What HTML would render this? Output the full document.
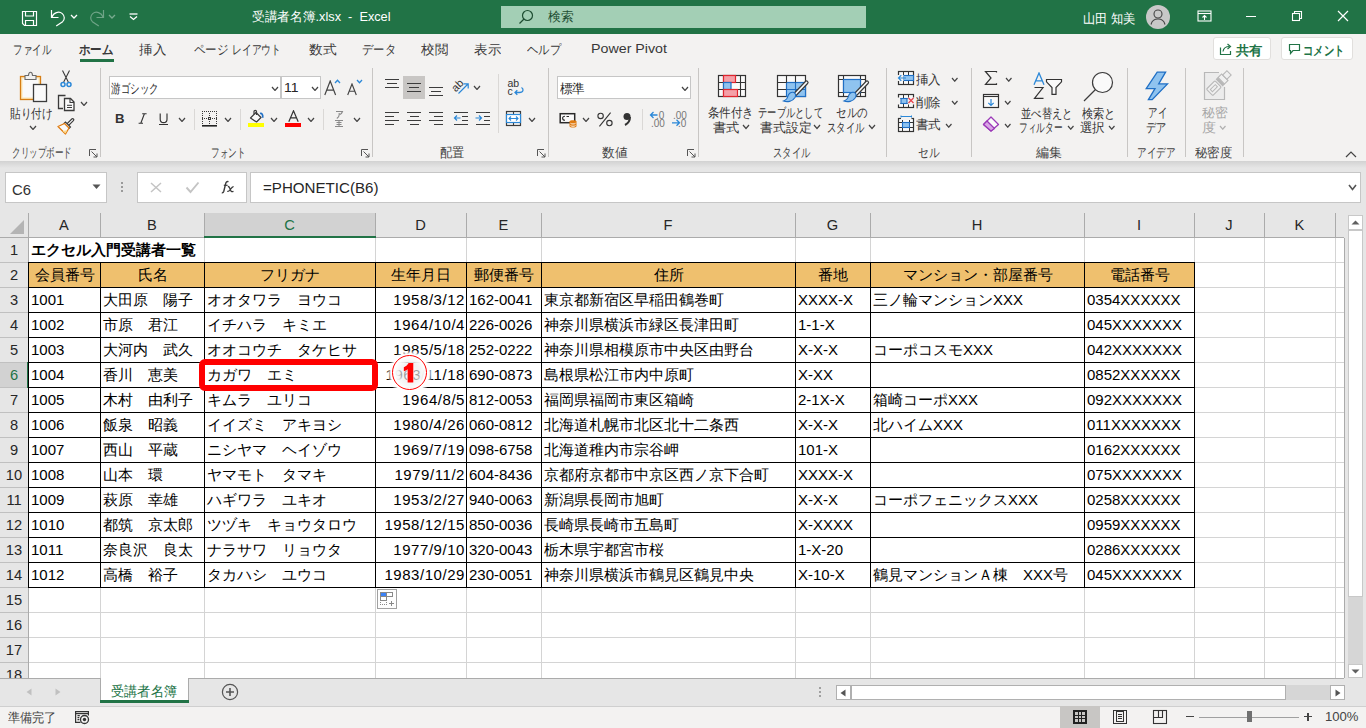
<!DOCTYPE html><html><head><meta charset='utf-8'><style>html,body{margin:0;padding:0;}body{width:1366px;height:728px;overflow:hidden;position:relative;background:#fff;font-family:"Liberation Sans", sans-serif;}</style></head><body><div style='position:absolute;left:0px;top:0px;width:1366px;height:34px;background:#217346;'></div>
<svg style='position:absolute;left:21px;top:10px;' width='17' height='17' viewBox='0 0 17 17' fill='none'><path d='M1.5 1.5H15.5V15.5H3.5L1.5 13.5Z' stroke='#fff' stroke-width='1.2'/><path d='M4.5 1.5V6H12.5V1.5' stroke='#fff' stroke-width='1.2'/><path d='M4.5 15.5V10.5H12.5V15.5' stroke='#fff' stroke-width='1.2'/></svg>
<svg style='position:absolute;left:50px;top:9px;' width='17' height='18' viewBox='0 0 17 18' fill='none'><path d='M1.5 1V8.5H8.5' stroke='#fff' stroke-width='1.2'/><path d='M1.9 8.2C3.5 3.5 9 1.8 12.3 4.6C15 7 14.8 10.5 12.6 12.7L6.2 17' stroke='#fff' stroke-width='1.2'/></svg>
<svg style='position:absolute;left:69.5px;top:13.8px;' width='8' height='5' viewBox='0 0 8 5' fill='none'><polyline points='1,1 4.0,4 7,1' stroke='#fff' stroke-width='1.3' fill='none'/></svg>
<svg style='position:absolute;left:88px;top:9px;opacity:.35' width='17' height='18' viewBox='0 0 17 18' fill='none'><path d='M15.5 1V8.5H8.5' stroke='#fff' stroke-width='1.2'/><path d='M15.1 8.2C13.5 3.5 8 1.8 4.7 4.6C2 7 2.2 10.5 4.4 12.7L10.8 17' stroke='#fff' stroke-width='1.2'/></svg>
<svg style='position:absolute;left:107.7px;top:13.8px;' width='8' height='5' viewBox='0 0 8 5' fill='none'><polyline points='1,1 4.0,4 7,1' stroke='#fff' stroke-width='1.3' fill='none'/></svg>
<div style='position:absolute;left:108px;top:13px;width:8px;height:6px;background:#217346;opacity:.6'></div>
<svg style='position:absolute;left:129px;top:13px;' width='9' height='8' viewBox='0 0 9 8' fill='none'><path d='M0.5 1H8.5' stroke='#fff' stroke-width='1.3'/><polyline points='1,3.5 4.5,6.5 8,3.5' stroke='#fff' stroke-width='1.3'/></svg>
<div style='position:absolute;left:252px;top:7.5px;line-height:17px;font-family:"Liberation Sans", sans-serif;font-size:13px;font-weight:normal;color:#ffffff;white-space:pre;transform:scaleX(0.9783);transform-origin:0 0;'>受講者名簿.xlsx  -  Excel</div>
<div style='position:absolute;left:501px;top:6px;width:365px;height:22px;background:#a3cfb5;'></div>
<svg style='position:absolute;left:518px;top:9px;' width='16' height='16' viewBox='0 0 16 16' fill='none'><circle cx='9.5' cy='6.5' r='5' stroke='#1d4d31' stroke-width='1.2'/><path d='M6 10L1.5 14.5' stroke='#1d4d31' stroke-width='1.3'/></svg>
<div style='position:absolute;left:548px;top:8.8px;line-height:16px;font-family:"Liberation Sans", sans-serif;font-size:12.5px;font-weight:normal;color:#1d4d31;white-space:pre;transform:scaleX(0.9808);transform-origin:0 0;'>検索</div>
<div style='position:absolute;left:1082.5px;top:9.5px;line-height:17px;font-family:"Liberation Sans", sans-serif;font-size:13px;font-weight:normal;color:#ffffff;white-space:pre;transform:scaleX(0.9438);transform-origin:0 0;'>山田 知美</div>
<svg style='position:absolute;left:1146px;top:5px;' width='24' height='24' viewBox='0 0 24 24' fill='none'><circle cx='12' cy='12' r='12' fill='#c8c8c8'/><circle cx='12' cy='9' r='4' stroke='#444' stroke-width='1.1'/><path d='M5 19.5C6 15.5 9 14 12 14C15 14 18 15.5 19 19.5' stroke='#444' stroke-width='1.1'/></svg>
<svg style='position:absolute;left:1197px;top:10px;' width='15' height='12' viewBox='0 0 15 12' fill='none'><rect x='1' y='1' width='13' height='10' stroke='#fff' stroke-width='1.1'/><path d='M1 3.5H14' stroke='#fff' stroke-width='1.1'/><path d='M7.5 10V5.5M5.5 7.5L7.5 5.5L9.5 7.5' stroke='#fff' stroke-width='1.1'/></svg>
<div style='position:absolute;left:1246px;top:16px;width:10px;height:1px;background:#ffffff;'></div>
<svg style='position:absolute;left:1291px;top:10px;' width='12' height='12' viewBox='0 0 12 12' fill='none'><path d='M3.5 3.5V1.5H10.5V8.5H8.5' stroke='#fff' stroke-width='1.1'/><rect x='1.5' y='3.5' width='7' height='7' stroke='#fff' stroke-width='1.1'/></svg>
<svg style='position:absolute;left:1337px;top:10px;' width='12' height='12' viewBox='0 0 12 12' fill='none'><path d='M1 1L11 11M11 1L1 11' stroke='#fff' stroke-width='1.2'/></svg>
<div style='position:absolute;left:0px;top:34px;width:1366px;height:127px;background:#f3f2f1;'></div>
<div style='position:absolute;left:13px;top:40.7px;line-height:17px;font-family:"Liberation Sans", sans-serif;font-size:13px;font-weight:normal;color:#383838;white-space:pre;transform:scaleX(0.7308);transform-origin:0 0;'>ファイル</div>
<div style='position:absolute;left:79px;top:40.7px;line-height:17px;font-family:"Liberation Sans", sans-serif;font-size:13px;font-weight:bold;color:#3a3a3a;white-space:pre;transform:scaleX(0.8846);transform-origin:0 0;'>ホーム</div>
<div style='position:absolute;left:80px;top:59px;width:34px;height:3px;background:#217346;'></div>
<div style='position:absolute;left:139px;top:40.7px;line-height:17px;font-family:"Liberation Sans", sans-serif;font-size:13px;font-weight:normal;color:#383838;white-space:pre;transform:scaleX(1.0385);transform-origin:0 0;'>挿入</div>
<div style='position:absolute;left:194px;top:40.7px;line-height:17px;font-family:"Liberation Sans", sans-serif;font-size:13px;font-weight:normal;color:#383838;white-space:pre;transform:scaleX(0.8846);transform-origin:0 0;'>ページ</div>
<div style='position:absolute;left:231.5px;top:40.7px;line-height:17px;font-family:"Liberation Sans", sans-serif;font-size:13px;font-weight:normal;color:#383838;white-space:pre;transform:scaleX(0.7538);transform-origin:0 0;'>レイアウト</div>
<div style='position:absolute;left:309px;top:40.7px;line-height:17px;font-family:"Liberation Sans", sans-serif;font-size:13px;font-weight:normal;color:#383838;white-space:pre;transform:scaleX(1.0577);transform-origin:0 0;'>数式</div>
<div style='position:absolute;left:361.5px;top:40.7px;line-height:17px;font-family:"Liberation Sans", sans-serif;font-size:13px;font-weight:normal;color:#383838;white-space:pre;transform:scaleX(0.8718);transform-origin:0 0;'>データ</div>
<div style='position:absolute;left:421px;top:40.7px;line-height:17px;font-family:"Liberation Sans", sans-serif;font-size:13px;font-weight:normal;color:#383838;white-space:pre;transform:scaleX(1.0385);transform-origin:0 0;'>校閲</div>
<div style='position:absolute;left:474px;top:40.7px;line-height:17px;font-family:"Liberation Sans", sans-serif;font-size:13px;font-weight:normal;color:#383838;white-space:pre;transform:scaleX(1.0385);transform-origin:0 0;'>表示</div>
<div style='position:absolute;left:527px;top:40.7px;line-height:17px;font-family:"Liberation Sans", sans-serif;font-size:13px;font-weight:normal;color:#383838;white-space:pre;transform:scaleX(0.8718);transform-origin:0 0;'>ヘルプ</div>
<div style='position:absolute;left:590.5px;top:40.2px;line-height:18px;font-family:"Liberation Sans", sans-serif;font-size:13.5px;font-weight:normal;color:#383838;white-space:pre;transform:scaleX(1.0551);transform-origin:0 0;'>Power Pivot</div>
<div style='position:absolute;left:1213px;top:37px;width:58px;height:23px;box-sizing:border-box;border:1px solid #e1dfdd;background:#ffffff;border-radius:3px'></div>
<svg style='position:absolute;left:1219px;top:42px;' width='14' height='14' viewBox='0 0 14 14' fill='none'><path d='M1.5 5.5V12.5H11.5V9' stroke='#217346' stroke-width='1.2'/><path d='M4 9.5C4.5 6 7 4.5 10.5 4.5' stroke='#217346' stroke-width='1.2'/><polyline points='8.5,2 11.5,4.5 8.5,7' stroke='#217346' stroke-width='1.2'/></svg>
<div style='position:absolute;left:1235.5px;top:42.0px;line-height:17px;font-family:"Liberation Sans", sans-serif;font-size:13px;font-weight:bold;color:#217346;white-space:pre;transform:scaleX(1.0192);transform-origin:0 0;'>共有</div>
<div style='position:absolute;left:1281px;top:37px;width:72px;height:23px;box-sizing:border-box;border:1px solid #e1dfdd;background:#ffffff;border-radius:3px'></div>
<svg style='position:absolute;left:1288px;top:43px;' width='13' height='12' viewBox='0 0 13 12' fill='none'><path d='M1.5 1.5H11.5V7.5H5L2.5 10.5V7.5H1.5Z' stroke='#217346' stroke-width='1.2'/></svg>
<div style='position:absolute;left:1303px;top:42.0px;line-height:17px;font-family:"Liberation Sans", sans-serif;font-size:13px;font-weight:bold;color:#217346;white-space:pre;transform:scaleX(0.7981);transform-origin:0 0;'>コメント</div>
<div style='position:absolute;left:100px;top:68px;width:1px;height:89px;background:#c8c6c4;'></div>
<div style='position:absolute;left:372px;top:68px;width:1px;height:89px;background:#c8c6c4;'></div>
<div style='position:absolute;left:548px;top:68px;width:1px;height:89px;background:#c8c6c4;'></div>
<div style='position:absolute;left:698px;top:68px;width:1px;height:89px;background:#c8c6c4;'></div>
<div style='position:absolute;left:886px;top:68px;width:1px;height:89px;background:#c8c6c4;'></div>
<div style='position:absolute;left:971px;top:68px;width:1px;height:89px;background:#c8c6c4;'></div>
<div style='position:absolute;left:1127px;top:68px;width:1px;height:89px;background:#c8c6c4;'></div>
<div style='position:absolute;left:1185px;top:68px;width:1px;height:89px;background:#c8c6c4;'></div>
<div style='position:absolute;left:1243px;top:68px;width:1px;height:89px;background:#c8c6c4;'></div>
<div style='position:absolute;left:498px;top:74px;width:1px;height:59px;background:#dad8d6;'></div>
<div style='position:absolute;left:194px;top:109px;width:1px;height:21px;background:#dad8d6;'></div>
<div style='position:absolute;left:240px;top:109px;width:1px;height:21px;background:#dad8d6;'></div>
<div style='position:absolute;left:323px;top:109px;width:1px;height:21px;background:#dad8d6;'></div>
<div style='position:absolute;left:642px;top:109px;width:1px;height:21px;background:#dad8d6;'></div>
<div style='position:absolute;left:11.5px;top:144.5px;line-height:16px;font-family:"Liberation Sans", sans-serif;font-size:12.5px;font-weight:normal;color:#444444;white-space:pre;transform:scaleX(0.6593);transform-origin:0 0;'>クリップボード</div>
<div style='position:absolute;left:211px;top:144.5px;line-height:16px;font-family:"Liberation Sans", sans-serif;font-size:12.5px;font-weight:normal;color:#444444;white-space:pre;transform:scaleX(0.6635);transform-origin:0 0;'>フォント</div>
<div style='position:absolute;left:439.5px;top:144.5px;line-height:16px;font-family:"Liberation Sans", sans-serif;font-size:12.5px;font-weight:normal;color:#444444;white-space:pre;transform:scaleX(0.9423);transform-origin:0 0;'>配置</div>
<div style='position:absolute;left:602px;top:144.5px;line-height:16px;font-family:"Liberation Sans", sans-serif;font-size:12.5px;font-weight:normal;color:#444444;white-space:pre;transform:scaleX(0.9808);transform-origin:0 0;'>数値</div>
<div style='position:absolute;left:773px;top:144.5px;line-height:16px;font-family:"Liberation Sans", sans-serif;font-size:12.5px;font-weight:normal;color:#444444;white-space:pre;transform:scaleX(0.7212);transform-origin:0 0;'>スタイル</div>
<div style='position:absolute;left:918px;top:144.5px;line-height:16px;font-family:"Liberation Sans", sans-serif;font-size:12.5px;font-weight:normal;color:#444444;white-space:pre;transform:scaleX(0.8269);transform-origin:0 0;'>セル</div>
<div style='position:absolute;left:1035.5px;top:144.5px;line-height:16px;font-family:"Liberation Sans", sans-serif;font-size:12.5px;font-weight:normal;color:#444444;white-space:pre;transform:scaleX(1.0000);transform-origin:0 0;'>編集</div>
<div style='position:absolute;left:1137px;top:144.5px;line-height:16px;font-family:"Liberation Sans", sans-serif;font-size:12.5px;font-weight:normal;color:#444444;white-space:pre;transform:scaleX(0.7404);transform-origin:0 0;'>アイデア</div>
<div style='position:absolute;left:1195px;top:144.5px;line-height:16px;font-family:"Liberation Sans", sans-serif;font-size:12.5px;font-weight:normal;color:#444444;white-space:pre;transform:scaleX(0.9487);transform-origin:0 0;'>秘密度</div>
<svg style='position:absolute;left:89px;top:149px;' width='9' height='9' viewBox='0 0 9 9' fill='none'><path d='M0.5 7V0.5H7' stroke='#555' stroke-width='1'/><path d='M2.5 2.5L8 8M4.5 8H8V4.5' stroke='#555' stroke-width='1'/></svg>
<svg style='position:absolute;left:361px;top:149px;' width='9' height='9' viewBox='0 0 9 9' fill='none'><path d='M0.5 7V0.5H7' stroke='#555' stroke-width='1'/><path d='M2.5 2.5L8 8M4.5 8H8V4.5' stroke='#555' stroke-width='1'/></svg>
<svg style='position:absolute;left:537px;top:149px;' width='9' height='9' viewBox='0 0 9 9' fill='none'><path d='M0.5 7V0.5H7' stroke='#555' stroke-width='1'/><path d='M2.5 2.5L8 8M4.5 8H8V4.5' stroke='#555' stroke-width='1'/></svg>
<svg style='position:absolute;left:687px;top:149px;' width='9' height='9' viewBox='0 0 9 9' fill='none'><path d='M0.5 7V0.5H7' stroke='#555' stroke-width='1'/><path d='M2.5 2.5L8 8M4.5 8H8V4.5' stroke='#555' stroke-width='1'/></svg>
<svg style='position:absolute;left:1345px;top:151px;' width='12' height='7' viewBox='0 0 12 7' fill='none'><polyline points='1,6 6,1 11,6' stroke='#444' stroke-width='1.2'/></svg>
<svg style='position:absolute;left:19px;top:71px;' width='29' height='32' viewBox='0 0 29 32' fill='none'><rect x='1.5' y='5.5' width='20' height='23' fill='#fde7b5' stroke='#d67d14' stroke-width='1.3'/><rect x='3.5' y='7.5' width='16' height='19' fill='#fafafa'/><path d='M6 8.5V4.5H9.5C9.5 2.5 10.5 1.2 11.5 1.2C12.5 1.2 13.5 2.5 13.5 4.5H17V8.5Z' fill='#f0f0f0' stroke='#6a6a6a' stroke-width='1.1'/><rect x='14.5' y='13.5' width='13' height='17' fill='#fafafa' stroke='#3c3c3c' stroke-width='1.3'/></svg>
<div style='position:absolute;left:9.5px;top:104.5px;line-height:17px;font-family:"Liberation Sans", sans-serif;font-size:13px;font-weight:normal;color:#333;white-space:pre;transform:scaleX(0.8173);transform-origin:0 0;'>貼り付け</div>
<svg style='position:absolute;left:28.5px;top:124.5px;' width='8' height='5.5' viewBox='0 0 8 5.5' fill='none'><polyline points='1,1 4.0,4.5 7,1' stroke='#444' stroke-width='1.2' fill='none'/></svg>
<svg style='position:absolute;left:60px;top:70px;' width='12' height='18' viewBox='0 0 12 18' fill='none'><path d='M2.5 0.5L8.3 12M9.5 0.5L3.7 12' stroke='#3a3a3a' stroke-width='1.1'/><circle cx='3' cy='14.5' r='2' stroke='#2b88d8' stroke-width='1.5'/><circle cx='9' cy='14.5' r='2' stroke='#2b88d8' stroke-width='1.5'/></svg>
<svg style='position:absolute;left:57px;top:94px;' width='18' height='18' viewBox='0 0 18 18' fill='none'><path d='M8.5 1.5H1.5V14.5H6' stroke='#3a3a3a' stroke-width='1.3'/><path d='M7.5 4.5H13.5L17 8V16.5H7.5Z' fill='#fafafa' stroke='#3a3a3a' stroke-width='1.3'/><path d='M13 4.5V8.5H17' stroke='#3a3a3a' stroke-width='1.1'/><path d='M10 11.3H15M10 13.5H15' stroke='#3a3a3a' stroke-width='1'/></svg>
<svg style='position:absolute;left:79.5px;top:100.5px;' width='8' height='5.5' viewBox='0 0 8 5.5' fill='none'><polyline points='1,1 4.0,4.5 7,1' stroke='#444' stroke-width='1.2' fill='none'/></svg>
<svg style='position:absolute;left:57px;top:118px;' width='18' height='17' viewBox='0 0 18 17' fill='none'><path d='M10.2 7.2L15.6 1.8' stroke='#3a3a3a' stroke-width='3.4' stroke-linecap='round'/><path d='M10.2 7.2L15.6 1.8' stroke='#fafafa' stroke-width='1.2' stroke-linecap='round'/><path d='M7 5.5L8.5 4L13.5 9L12 10.5Z' fill='#fafafa' stroke='#3a3a3a' stroke-width='1.1'/><path d='M1 8.5L7.5 5.5L12 10L8.5 16Z' fill='#fafafa' stroke='#e07b10' stroke-width='1.3' stroke-linejoin='round'/><path d='M5.5 13L10.2 12.2L8.5 15.5Z' fill='#fcd98a'/></svg>
<div style='position:absolute;left:109px;top:76px;width:172px;height:23px;box-sizing:border-box;border:1px solid #c6c6c6;background:#ffffff;'></div>
<div style='position:absolute;left:111px;top:79.5px;line-height:17px;font-family:"Liberation Sans", sans-serif;font-size:13px;font-weight:normal;color:#262626;white-space:pre;transform:scaleX(0.7308);transform-origin:0 0;'>游ゴシック</div>
<svg style='position:absolute;left:270.5px;top:85.5px;' width='8' height='5.5' viewBox='0 0 8 5.5' fill='none'><polyline points='1,1 4.0,4.5 7,1' stroke='#444' stroke-width='1.2' fill='none'/></svg>
<div style='position:absolute;left:281px;top:76px;width:40px;height:23px;box-sizing:border-box;border:1px solid #c6c6c6;background:#ffffff;'></div>
<div style='position:absolute;left:283.5px;top:79.0px;line-height:18px;font-family:"Liberation Sans", sans-serif;font-size:13.5px;font-weight:normal;color:#262626;white-space:pre;transform:scaleX(1.0346);transform-origin:0 0;'>11</div>
<svg style='position:absolute;left:310.5px;top:85.5px;' width='8' height='5.5' viewBox='0 0 8 5.5' fill='none'><polyline points='1,1 4.0,4.5 7,1' stroke='#444' stroke-width='1.2' fill='none'/></svg>
<svg style='position:absolute;left:324px;top:80px;' width='13' height='16' viewBox='0 0 13 16' fill='none'><path d='M0.8 15L6.2 1L11.6 15M2.7 10.2H9.7' stroke='#444' stroke-width='1.2'/></svg>
<svg style='position:absolute;left:334px;top:79px;' width='7' height='5' viewBox='0 0 7 5' fill='none'><polyline points='1,4 3.5,1.3 6,4' stroke='#2b88d8' stroke-width='1.3'/></svg>
<svg style='position:absolute;left:347px;top:83px;' width='11' height='13' viewBox='0 0 11 13' fill='none'><path d='M0.7 12L5 1L9.3 12M2.2 8.2H7.8' stroke='#444' stroke-width='1.15'/></svg>
<svg style='position:absolute;left:356px;top:79px;' width='7' height='5' viewBox='0 0 7 5' fill='none'><polyline points='1,1 3.5,3.7 6,1' stroke='#2b88d8' stroke-width='1.3'/></svg>
<div style='position:absolute;left:115px;top:109.7px;line-height:18px;font-family:"Liberation Sans", sans-serif;font-size:13.5px;font-weight:bold;color:#333;white-space:pre;transform:scaleX(0.9744);transform-origin:0 0;'>B</div>
<svg style='position:absolute;left:138px;top:113px;' width='9' height='11' viewBox='0 0 9 11' fill='none'><path d='M4.2 0.8H8.6M0.6 10.3H5M6.4 0.8L2.8 10.3' stroke='#333' stroke-width='1.1'/></svg>
<svg style='position:absolute;left:159px;top:113px;' width='10' height='13' viewBox='0 0 10 13' fill='none'><path d='M1.2 0.5V6.2C1.2 8.5 2.6 9.6 4.6 9.6C6.6 9.6 8 8.5 8 6.2V0.5' stroke='#333' stroke-width='1.15'/></svg>
<div style='position:absolute;left:159px;top:124px;width:9px;height:1px;background:#333;'></div>
<svg style='position:absolute;left:177.5px;top:116.5px;' width='8' height='5.5' viewBox='0 0 8 5.5' fill='none'><polyline points='1,1 4.0,4.5 7,1' stroke='#444' stroke-width='1.2' fill='none'/></svg>
<svg style='position:absolute;left:202px;top:111px;' width='15' height='16' viewBox='0 0 15 16' fill='none'><rect x='0' y='0' width='1' height='1' fill='#3a3a3a'/><rect x='0' y='7' width='1' height='1' fill='#3a3a3a'/><rect x='2' y='0' width='1' height='1' fill='#3a3a3a'/><rect x='2' y='7' width='1' height='1' fill='#3a3a3a'/><rect x='4' y='0' width='1' height='1' fill='#3a3a3a'/><rect x='4' y='7' width='1' height='1' fill='#3a3a3a'/><rect x='6' y='0' width='1' height='1' fill='#3a3a3a'/><rect x='6' y='7' width='1' height='1' fill='#3a3a3a'/><rect x='8' y='0' width='1' height='1' fill='#3a3a3a'/><rect x='8' y='7' width='1' height='1' fill='#3a3a3a'/><rect x='10' y='0' width='1' height='1' fill='#3a3a3a'/><rect x='10' y='7' width='1' height='1' fill='#3a3a3a'/><rect x='12' y='0' width='1' height='1' fill='#3a3a3a'/><rect x='12' y='7' width='1' height='1' fill='#3a3a3a'/><rect x='14' y='0' width='1' height='1' fill='#3a3a3a'/><rect x='14' y='7' width='1' height='1' fill='#3a3a3a'/><rect x='0' y='2' width='1' height='1' fill='#3a3a3a'/><rect x='7' y='2' width='1' height='1' fill='#3a3a3a'/><rect x='14' y='2' width='1' height='1' fill='#3a3a3a'/><rect x='0' y='4' width='1' height='1' fill='#3a3a3a'/><rect x='7' y='4' width='1' height='1' fill='#3a3a3a'/><rect x='14' y='4' width='1' height='1' fill='#3a3a3a'/><rect x='0' y='6' width='1' height='1' fill='#3a3a3a'/><rect x='7' y='6' width='1' height='1' fill='#3a3a3a'/><rect x='14' y='6' width='1' height='1' fill='#3a3a3a'/><rect x='0' y='8' width='1' height='1' fill='#3a3a3a'/><rect x='7' y='8' width='1' height='1' fill='#3a3a3a'/><rect x='14' y='8' width='1' height='1' fill='#3a3a3a'/><rect x='0' y='10' width='1' height='1' fill='#3a3a3a'/><rect x='7' y='10' width='1' height='1' fill='#3a3a3a'/><rect x='14' y='10' width='1' height='1' fill='#3a3a3a'/><rect x='0' y='12' width='1' height='1' fill='#3a3a3a'/><rect x='7' y='12' width='1' height='1' fill='#3a3a3a'/><rect x='14' y='12' width='1' height='1' fill='#3a3a3a'/><rect x='6' y='6' width='3' height='3' fill='#3a3a3a'/><rect x='7' y='7' width='1' height='1' fill='#f3f2f1'/><rect x='0' y='14' width='15' height='1.6' fill='#222'/></svg>
<svg style='position:absolute;left:223.5px;top:116.5px;' width='8' height='5.5' viewBox='0 0 8 5.5' fill='none'><polyline points='1,1 4.0,4.5 7,1' stroke='#444' stroke-width='1.2' fill='none'/></svg>
<svg style='position:absolute;left:248px;top:109px;' width='18' height='18' viewBox='0 0 18 18' fill='none'><path d='M2.5 9L8 3.5L13 8.5L8.5 13Z' stroke='#3a3a3a' stroke-width='1.2' fill='#fafafa' stroke-linejoin='round'/><path d='M6 5.5V2.5C6 1 8.5 1 8.5 2.5V6' stroke='#3a3a3a' stroke-width='1.2'/><path d='M12 4.5C14 4 15.2 6 14.6 8.8' stroke='#1f6fc5' stroke-width='1.7'/><rect x='0' y='14' width='16' height='4' fill='#ffff00'/></svg>
<svg style='position:absolute;left:269.5px;top:116.5px;' width='8' height='5.5' viewBox='0 0 8 5.5' fill='none'><polyline points='1,1 4.0,4.5 7,1' stroke='#444' stroke-width='1.2' fill='none'/></svg>
<svg style='position:absolute;left:288px;top:110px;' width='11' height='12' viewBox='0 0 11 12' fill='none'><path d='M0.8 11.8L5.5 0.8L10.2 11.8M2.6 7.8H8.4' stroke='#333' stroke-width='1.2'/></svg>
<div style='position:absolute;left:285px;top:123px;width:16px;height:4px;background:#ff0000;'></div>
<svg style='position:absolute;left:306.5px;top:116.5px;' width='8' height='5.5' viewBox='0 0 8 5.5' fill='none'><polyline points='1,1 4.0,4.5 7,1' stroke='#444' stroke-width='1.2' fill='none'/></svg>
<svg style='position:absolute;left:334px;top:110px;' width='10' height='18' viewBox='0 0 10 18' fill='none'><path d='M2 1.5H8.5C8 3 7 4 6 4.6M5.2 3V4.8C5.2 6.5 4.2 7.6 2.8 8.4' stroke='#8a8a8a' stroke-width='1.1'/><path d='M1 10.5H9M2.5 12.5H7.5M2.5 14.5H7.5M1 16.5H9' stroke='#8a8a8a' stroke-width='1.1'/><path d='M5 10.5V16.5' stroke='#8a8a8a' stroke-width='1'/></svg>
<svg style='position:absolute;left:352.5px;top:116.5px;' width='8' height='5.5' viewBox='0 0 8 5.5' fill='none'><polyline points='1,1 4.0,4.5 7,1' stroke='#444' stroke-width='1.2' fill='none'/></svg>
<div style='position:absolute;left:385px;top:79px;width:14px;height:1.3px;background:#3c3c3c;'></div>
<div style='position:absolute;left:387px;top:83px;width:10px;height:1.3px;background:#3c3c3c;'></div>
<div style='position:absolute;left:385px;top:87px;width:14px;height:1.3px;background:#3c3c3c;'></div>
<div style='position:absolute;left:403px;top:76px;width:22px;height:23px;background:#c8c6c4;'></div>
<div style='position:absolute;left:407px;top:82.5px;width:14px;height:1.3px;background:#3c3c3c;'></div>
<div style='position:absolute;left:409px;top:86.5px;width:10px;height:1.3px;background:#3c3c3c;'></div>
<div style='position:absolute;left:407px;top:90.5px;width:14px;height:1.3px;background:#3c3c3c;'></div>
<div style='position:absolute;left:429px;top:86.5px;width:14px;height:1.3px;background:#3c3c3c;'></div>
<div style='position:absolute;left:431px;top:90.5px;width:10px;height:1.3px;background:#3c3c3c;'></div>
<div style='position:absolute;left:429px;top:94.5px;width:14px;height:1.3px;background:#3c3c3c;'></div>
<svg style='position:absolute;left:451px;top:76px;' width='20' height='20' viewBox='0 0 20 20' fill='none'><text x='0' y='13' font-size='11' fill='#333' font-family='Liberation Sans' transform='rotate(-45 6.5 9)'>ab</text><path d='M7.5 17.5L17 8M12.5 7.8H17.2V12.5' stroke='#2b88d8' stroke-width='1.2'/></svg>
<svg style='position:absolute;left:473px;top:84.5px;' width='8' height='5.5' viewBox='0 0 8 5.5' fill='none'><polyline points='1,1 4.0,4.5 7,1' stroke='#444' stroke-width='1.2' fill='none'/></svg>
<div style='position:absolute;left:385px;top:112px;width:14px;height:1.3px;background:#3c3c3c;'></div>
<div style='position:absolute;left:385px;top:116px;width:9px;height:1.3px;background:#3c3c3c;'></div>
<div style='position:absolute;left:385px;top:120px;width:14px;height:1.3px;background:#3c3c3c;'></div>
<div style='position:absolute;left:385px;top:124px;width:9px;height:1.3px;background:#3c3c3c;'></div>
<div style='position:absolute;left:407px;top:112px;width:14px;height:1.3px;background:#3c3c3c;'></div>
<div style='position:absolute;left:409.5px;top:116px;width:9px;height:1.3px;background:#3c3c3c;'></div>
<div style='position:absolute;left:407px;top:120px;width:14px;height:1.3px;background:#3c3c3c;'></div>
<div style='position:absolute;left:409.5px;top:124px;width:9px;height:1.3px;background:#3c3c3c;'></div>
<div style='position:absolute;left:429px;top:112px;width:14px;height:1.3px;background:#3c3c3c;'></div>
<div style='position:absolute;left:434px;top:116px;width:9px;height:1.3px;background:#3c3c3c;'></div>
<div style='position:absolute;left:429px;top:120px;width:14px;height:1.3px;background:#3c3c3c;'></div>
<div style='position:absolute;left:434px;top:124px;width:9px;height:1.3px;background:#3c3c3c;'></div>
<div style='position:absolute;left:454px;top:112px;width:14px;height:1.3px;background:#3c3c3c;'></div>
<div style='position:absolute;left:454px;top:124px;width:14px;height:1.3px;background:#3c3c3c;'></div>
<div style='position:absolute;left:462px;top:116px;width:6px;height:1.3px;background:#3c3c3c;'></div>
<div style='position:absolute;left:462px;top:120px;width:6px;height:1.3px;background:#3c3c3c;'></div>
<svg style='position:absolute;left:453px;top:114px;' width='8' height='8' viewBox='0 0 8 8' fill='none'><path d='M7.5 4H1.5M4 1.5L1.5 4L4 6.5' stroke='#2b88d8' stroke-width='1.2'/></svg>
<div style='position:absolute;left:476px;top:112px;width:14px;height:1.3px;background:#3c3c3c;'></div>
<div style='position:absolute;left:476px;top:124px;width:14px;height:1.3px;background:#3c3c3c;'></div>
<div style='position:absolute;left:484px;top:116px;width:6px;height:1.3px;background:#3c3c3c;'></div>
<div style='position:absolute;left:484px;top:120px;width:6px;height:1.3px;background:#3c3c3c;'></div>
<svg style='position:absolute;left:475px;top:114px;' width='8' height='8' viewBox='0 0 8 8' fill='none'><path d='M0.5 4H6.5M4 1.5L6.5 4L4 6.5' stroke='#2b88d8' stroke-width='1.2'/></svg>
<svg style='position:absolute;left:507px;top:78px;' width='18' height='19' viewBox='0 0 18 19' fill='none'><text x='0.5' y='9' font-size='10.5' fill='#333' font-family='Liberation Sans'>ab</text><text x='0.5' y='16.5' font-size='10.5' fill='#333' font-family='Liberation Sans'>c</text><path d='M14.5 9.5C17 11 16.5 14.5 12.5 14.5H8M10.3 12.2L8 14.5L10.3 16.8' stroke='#2b88d8' stroke-width='1.3'/></svg>
<svg style='position:absolute;left:505px;top:110px;' width='17' height='17' viewBox='0 0 17 17' fill='none'><rect x='1.5' y='1.5' width='14' height='14' stroke='#3c3c3c' stroke-width='1.2'/><path d='M8.5 1.5V4.5M8.5 12.5V15.5M1.5 4.5H15.5M1.5 12.5H15.5' stroke='#3c3c3c' stroke-width='1.1'/><rect x='1.5' y='4.5' width='14' height='8' stroke='#2b88d8' stroke-width='1.2' fill='#fff'/><path d='M4 8.5H13M6 6.5L4 8.5L6 10.5M11 6.5L13 8.5L11 10.5' stroke='#2b88d8' stroke-width='1.1'/></svg>
<svg style='position:absolute;left:527.5px;top:116.5px;' width='8' height='5.5' viewBox='0 0 8 5.5' fill='none'><polyline points='1,1 4.0,4.5 7,1' stroke='#444' stroke-width='1.2' fill='none'/></svg>
<div style='position:absolute;left:557px;top:76px;width:134px;height:23px;box-sizing:border-box;border:1px solid #c6c6c6;background:#ffffff;'></div>
<div style='position:absolute;left:559.5px;top:79.5px;line-height:17px;font-family:"Liberation Sans", sans-serif;font-size:13px;font-weight:normal;color:#262626;white-space:pre;transform:scaleX(0.9615);transform-origin:0 0;'>標準</div>
<svg style='position:absolute;left:680.5px;top:85.5px;' width='8' height='5.5' viewBox='0 0 8 5.5' fill='none'><polyline points='1,1 4.0,4.5 7,1' stroke='#444' stroke-width='1.2' fill='none'/></svg>
<svg style='position:absolute;left:559px;top:112px;' width='19' height='18' viewBox='0 0 19 18' fill='none'><rect x='1.2' y='1.7' width='14.5' height='9' stroke='#2a2a2a' stroke-width='1.5' fill='#fafafa'/><path d='M6 4.3C4.2 4.3 3.6 5.2 3.6 6.3S4.2 8.3 6 8.3' stroke='#2a2a2a' stroke-width='1.1'/><path d='M7.5 4.5H10' stroke='#2a2a2a' stroke-width='1'/><path d='M10.5 9.5C10.5 7.8 17.5 7.8 17.5 9.5V14.3C17.5 16 10.5 16 10.5 14.3Z' fill='#e07b10'/><path d='M11.5 11.3C12.5 12.2 15.5 12.2 16.5 11.3M11.5 13.6C12.5 14.5 15.5 14.5 16.5 13.6' stroke='#fff' stroke-width='0.9'/></svg>
<svg style='position:absolute;left:581.5px;top:116.5px;' width='8' height='5.5' viewBox='0 0 8 5.5' fill='none'><polyline points='1,1 4.0,4.5 7,1' stroke='#444' stroke-width='1.2' fill='none'/></svg>
<svg style='position:absolute;left:597px;top:112px;' width='16' height='15' viewBox='0 0 16 15' fill='none'><circle cx='3.6' cy='3.9' r='2.7' stroke='#333' stroke-width='1.1'/><circle cx='12.4' cy='11.1' r='2.7' stroke='#333' stroke-width='1.1'/><path d='M13.6 0.6L2.4 14.4' stroke='#333' stroke-width='1.1'/></svg>
<svg style='position:absolute;left:622px;top:112px;' width='10' height='14' viewBox='0 0 10 14' fill='none'><circle cx='5' cy='4.5' r='3.5' fill='#333'/><path d='M8 5C8 9 6 11.5 3 13' stroke='#333' stroke-width='2'/></svg>
<svg style='position:absolute;left:649px;top:110px;' width='18' height='17' viewBox='0 0 18 17' fill='none'><path d='M8.5 5H1.5M4.5 2L1.5 5L4.5 8' stroke='#2b88d8' stroke-width='1.3'/><text x='7' y='9' font-size='10' fill='#777' font-family='Liberation Sans'>.0</text><text x='2' y='16.5' font-size='10' fill='#777' font-family='Liberation Sans'>.00</text></svg>
<svg style='position:absolute;left:671px;top:110px;' width='18' height='17' viewBox='0 0 18 17' fill='none'><text x='2' y='9' font-size='10' fill='#777' font-family='Liberation Sans'>.00</text><path d='M1 12.8H8.5M5.5 9.8L8.5 12.8L5.5 15.8' stroke='#2b88d8' stroke-width='1.3'/><text x='7' y='16.5' font-size='10' fill='#777' font-family='Liberation Sans'>.0</text></svg>
<svg style='position:absolute;left:717px;top:74px;' width='30' height='24' viewBox='0 0 30 24' fill='none'><rect x='1.5' y='1.5' width='27' height='21' fill='#fafafa' stroke='#333' stroke-width='1.2'/><path d='M1.5 8.5H28.5M1.5 15.5H28.5M6.5 1.5V22.5M23.5 1.5V22.5' stroke='#333' stroke-width='1.1'/><rect x='6.5' y='1.5' width='12' height='7' fill='#f4a0a8' stroke='#e0252e' stroke-width='1.2'/><rect x='6.5' y='8.5' width='7.5' height='7' fill='#8fc3ef' stroke='#1f6fc5' stroke-width='1.2'/><rect x='6.5' y='15.5' width='14' height='7' fill='#f4a0a8' stroke='#e0252e' stroke-width='1.2'/></svg>
<div style='position:absolute;left:708px;top:104.0px;line-height:17px;font-family:"Liberation Sans", sans-serif;font-size:13px;font-weight:normal;color:#333;white-space:pre;transform:scaleX(0.8846);transform-origin:0 0;'>条件付き</div>
<div style='position:absolute;left:713px;top:118.5px;line-height:17px;font-family:"Liberation Sans", sans-serif;font-size:13px;font-weight:normal;color:#333;white-space:pre;transform:scaleX(1.0192);transform-origin:0 0;'>書式</div>
<svg style='position:absolute;left:742px;top:124px;' width='8' height='5.5' viewBox='0 0 8 5.5' fill='none'><polyline points='1,1 4.0,4.5 7,1' stroke='#444' stroke-width='1.2' fill='none'/></svg>
<svg style='position:absolute;left:776px;top:74px;' width='34' height='30' viewBox='0 0 34 30' fill='none'><rect x='1.5' y='1.5' width='28' height='21' fill='#fafafa' stroke='#333' stroke-width='1.2'/><rect x='10.5' y='8.5' width='19' height='14' fill='#8fc3ef' stroke='#1f6fc5' stroke-width='1.2'/><path d='M1.5 8.5H10.5M1.5 15.5H10.5M10.5 1.5V8.5M19.5 1.5V8.5' stroke='#333' stroke-width='1.1'/><path d='M10.5 15.5H29.5M19.5 8.5V22.5' stroke='#1f6fc5' stroke-width='1.1'/><path d='M30.5 8.5L19.5 20' stroke='#3a3a3a' stroke-width='4.2' stroke-linecap='round'/><path d='M30.5 8.5L19.5 20' stroke='#fafafa' stroke-width='1.8' stroke-linecap='round'/><path d='M18 18.5C15 17.5 12.5 19.5 12 22C11.5 24.5 10 26 7.5 27C11 28.3 16.5 27.8 19 23.5C20 21.5 19.5 19.5 18 18.5Z' fill='#8fc3ef' stroke='#1f6fc5' stroke-width='1.1'/></svg>
<div style='position:absolute;left:758px;top:104.0px;line-height:17px;font-family:"Liberation Sans", sans-serif;font-size:13px;font-weight:normal;color:#333;white-space:pre;transform:scaleX(0.7143);transform-origin:0 0;'>テーブルとして</div>
<div style='position:absolute;left:760px;top:118.5px;line-height:17px;font-family:"Liberation Sans", sans-serif;font-size:13px;font-weight:normal;color:#333;white-space:pre;transform:scaleX(0.9904);transform-origin:0 0;'>書式設定</div>
<svg style='position:absolute;left:812.5px;top:124px;' width='8' height='5.5' viewBox='0 0 8 5.5' fill='none'><polyline points='1,1 4.0,4.5 7,1' stroke='#444' stroke-width='1.2' fill='none'/></svg>
<svg style='position:absolute;left:837px;top:74px;' width='34' height='30' viewBox='0 0 34 30' fill='none'><rect x='1.5' y='1.5' width='27' height='21' fill='#fafafa' stroke='#333' stroke-width='1.2'/><path d='M1.5 5.5H28.5M1.5 18.5H28.5M6.5 1.5V22.5M23.5 1.5V22.5' stroke='#333' stroke-width='1.1'/><rect x='6.5' y='5.5' width='17' height='13' fill='#8fc3ef' stroke='#1f6fc5' stroke-width='1.2'/><path d='M30.0 8.5L19.0 20' stroke='#3a3a3a' stroke-width='4.2' stroke-linecap='round'/><path d='M30.0 8.5L19.0 20' stroke='#fafafa' stroke-width='1.8' stroke-linecap='round'/><path d='M17.5 18.5C14.5 17.5 12.0 19.5 11.5 22C11.0 24.5 9.5 26 7.0 27C10.5 28.3 16.0 27.8 18.5 23.5C19.5 21.5 19.0 19.5 17.5 18.5Z' fill='#8fc3ef' stroke='#1f6fc5' stroke-width='1.1'/></svg>
<div style='position:absolute;left:836px;top:104.0px;line-height:17px;font-family:"Liberation Sans", sans-serif;font-size:13px;font-weight:normal;color:#333;white-space:pre;transform:scaleX(0.8077);transform-origin:0 0;'>セルの</div>
<div style='position:absolute;left:827px;top:118.5px;line-height:17px;font-family:"Liberation Sans", sans-serif;font-size:13px;font-weight:normal;color:#333;white-space:pre;transform:scaleX(0.7212);transform-origin:0 0;'>スタイル</div>
<svg style='position:absolute;left:867.5px;top:124px;' width='8' height='5.5' viewBox='0 0 8 5.5' fill='none'><polyline points='1,1 4.0,4.5 7,1' stroke='#444' stroke-width='1.2' fill='none'/></svg>
<svg style='position:absolute;left:897px;top:70px;' width='18' height='16' viewBox='0 0 18 16' fill='none'><rect x='1.5' y='1.5' width='15' height='13' fill='#fafafa' stroke='#333' stroke-width='1.2'/><path d='M1.5 5.5H16.5M1.5 10.5H16.5M6.5 1.5V14.5M11.5 1.5V14.5' stroke='#333' stroke-width='1'/><rect x='6.5' y='5.5' width='10' height='5' fill='#8fc3ef' stroke='#1f6fc5' stroke-width='1.1'/><rect x='0' y='5' width='6.5' height='6' fill='#f3f2f1'/><path d='M9 8H1.5M4.3 5.2L1.5 8L4.3 10.8' stroke='#2b88d8' stroke-width='1.2'/></svg>
<div style='position:absolute;left:916px;top:70.5px;line-height:17px;font-family:"Liberation Sans", sans-serif;font-size:13px;font-weight:normal;color:#333;white-space:pre;transform:scaleX(0.9615);transform-origin:0 0;'>挿入</div>
<svg style='position:absolute;left:951px;top:77px;' width='7.5' height='5.2' viewBox='0 0 7.5 5.2' fill='none'><polyline points='1,1 3.75,4.2 6.5,1' stroke='#444' stroke-width='1.2' fill='none'/></svg>
<svg style='position:absolute;left:897px;top:93px;' width='18' height='16' viewBox='0 0 18 16' fill='none'><rect x='1.5' y='1.5' width='15' height='13' fill='#fafafa' stroke='#333' stroke-width='1.2'/><path d='M1.5 5.5H16.5M1.5 10.5H16.5M6.5 1.5V14.5M11.5 1.5V14.5' stroke='#333' stroke-width='1'/><rect x='0' y='4.5' width='3.5' height='7' fill='#f3f2f1'/><rect x='10.5' y='4.5' width='8' height='7' fill='#f3f2f1'/><rect x='4' y='5.5' width='6' height='5' fill='#8fc3ef' stroke='#1f6fc5' stroke-width='1.1'/><path d='M11.5 5L16.5 10M16.5 5L11.5 10' stroke='#e8404a' stroke-width='1.2'/></svg>
<div style='position:absolute;left:916px;top:93.5px;line-height:17px;font-family:"Liberation Sans", sans-serif;font-size:13px;font-weight:normal;color:#333;white-space:pre;transform:scaleX(0.9615);transform-origin:0 0;'>削除</div>
<svg style='position:absolute;left:951px;top:100px;' width='7.5' height='5.2' viewBox='0 0 7.5 5.2' fill='none'><polyline points='1,1 3.75,4.2 6.5,1' stroke='#444' stroke-width='1.2' fill='none'/></svg>
<svg style='position:absolute;left:897px;top:115px;' width='18' height='18' viewBox='0 0 18 18' fill='none'><rect x='1.5' y='3.5' width='15' height='13' fill='#fafafa' stroke='#333' stroke-width='1.2'/><path d='M1.5 7.5H16.5M1.5 12.5H16.5M5.5 3.5V16.5M12.5 3.5V16.5' stroke='#333' stroke-width='1'/><rect x='5.5' y='7.5' width='7' height='5' fill='#8fc3ef' stroke='#1f6fc5' stroke-width='1.1'/><rect x='4' y='2' width='10.5' height='3' fill='#f3f2f1'/><path d='M4 1.5H14.5M4 0.5V2.5M14.5 0.5V2.5' stroke='#2b88d8' stroke-width='1'/></svg>
<div style='position:absolute;left:916px;top:116.0px;line-height:17px;font-family:"Liberation Sans", sans-serif;font-size:13px;font-weight:normal;color:#333;white-space:pre;transform:scaleX(0.9615);transform-origin:0 0;'>書式</div>
<svg style='position:absolute;left:945px;top:123px;' width='7.5' height='5.2' viewBox='0 0 7.5 5.2' fill='none'><polyline points='1,1 3.75,4.2 6.5,1' stroke='#444' stroke-width='1.2' fill='none'/></svg>
<svg style='position:absolute;left:984px;top:70px;' width='14' height='16' viewBox='0 0 14 16' fill='none'><path d='M12.5 2.5V1.5H1.5L7 8L1.5 14.3H12.5V13.3' stroke='#333' stroke-width='1.2'/></svg>
<svg style='position:absolute;left:1004.5px;top:77px;' width='7.5' height='5.2' viewBox='0 0 7.5 5.2' fill='none'><polyline points='1,1 3.75,4.2 6.5,1' stroke='#444' stroke-width='1.2' fill='none'/></svg>
<svg style='position:absolute;left:982px;top:93px;' width='18' height='16' viewBox='0 0 18 16' fill='none'><rect x='1.5' y='1.5' width='15' height='13' fill='#fafafa' stroke='#333' stroke-width='1.2'/><path d='M1.5 3.5H16.5' stroke='#333' stroke-width='1.1'/><path d='M9 6V12.5M6.3 9.8L9 12.5L11.7 9.8' stroke='#2b88d8' stroke-width='1.2'/></svg>
<svg style='position:absolute;left:1003.5px;top:100px;' width='7.5' height='5.2' viewBox='0 0 7.5 5.2' fill='none'><polyline points='1,1 3.75,4.2 6.5,1' stroke='#444' stroke-width='1.2' fill='none'/></svg>
<svg style='position:absolute;left:982px;top:115px;' width='18' height='17' viewBox='0 0 18 17' fill='none'><path d='M1.5 9.5L9 2L16.5 9.5L9 16Z' fill='#fafafa' stroke='#9b39b8' stroke-width='1.3' stroke-linejoin='round'/><path d='M1.5 9.5L5 6L12.5 13.5L9 16Z' fill='#d9a6e6' stroke='#9b39b8' stroke-width='1.3' stroke-linejoin='round'/></svg>
<svg style='position:absolute;left:1003.5px;top:123px;' width='7.5' height='5.2' viewBox='0 0 7.5 5.2' fill='none'><polyline points='1,1 3.75,4.2 6.5,1' stroke='#444' stroke-width='1.2' fill='none'/></svg>
<svg style='position:absolute;left:1033px;top:72px;' width='12' height='14' viewBox='0 0 12 14' fill='none'><path d='M1 12.8L6 1L11 12.8M2.8 8.8H9.2' stroke='#2b88d8' stroke-width='1.3'/></svg>
<svg style='position:absolute;left:1033px;top:86px;' width='12' height='14' viewBox='0 0 12 14' fill='none'><path d='M1.5 1.5H10L1.5 12.3H10.5' stroke='#333' stroke-width='1.2'/></svg>
<svg style='position:absolute;left:1045px;top:78px;' width='19' height='18' viewBox='0 0 19 18' fill='none'><path d='M1.5 1.5H16.5V3.8L11 9.5V16.3H7V9.5L1.5 3.8Z' stroke='#333' stroke-width='1.2' fill='#fafafa'/></svg>
<div style='position:absolute;left:1021px;top:105.0px;line-height:17px;font-family:"Liberation Sans", sans-serif;font-size:13px;font-weight:normal;color:#333;white-space:pre;transform:scaleX(0.7923);transform-origin:0 0;'>並べ替えと</div>
<div style='position:absolute;left:1019px;top:118.8px;line-height:17px;font-family:"Liberation Sans", sans-serif;font-size:13px;font-weight:normal;color:#333;white-space:pre;transform:scaleX(0.6692);transform-origin:0 0;'>フィルター</div>
<svg style='position:absolute;left:1066.5px;top:125px;' width='7.5' height='5.2' viewBox='0 0 7.5 5.2' fill='none'><polyline points='1,1 3.75,4.2 6.5,1' stroke='#444' stroke-width='1.2' fill='none'/></svg>
<svg style='position:absolute;left:1083px;top:71px;' width='31' height='31' viewBox='0 0 31 31' fill='none'><circle cx='19.5' cy='11.5' r='10' fill='#fafafa' stroke='#3c3c3c' stroke-width='1.2'/><path d='M12.5 18.5L1 30' stroke='#3c3c3c' stroke-width='1.3'/></svg>
<div style='position:absolute;left:1082px;top:105.0px;line-height:17px;font-family:"Liberation Sans", sans-serif;font-size:13px;font-weight:normal;color:#333;white-space:pre;transform:scaleX(0.8590);transform-origin:0 0;'>検索と</div>
<div style='position:absolute;left:1080px;top:118.8px;line-height:17px;font-family:"Liberation Sans", sans-serif;font-size:13px;font-weight:normal;color:#333;white-space:pre;transform:scaleX(0.9615);transform-origin:0 0;'>選択</div>
<svg style='position:absolute;left:1108px;top:125px;' width='7.5' height='5.2' viewBox='0 0 7.5 5.2' fill='none'><polyline points='1,1 3.75,4.2 6.5,1' stroke='#444' stroke-width='1.2' fill='none'/></svg>
<svg style='position:absolute;left:1145px;top:71px;' width='24' height='30' viewBox='0 0 24 30' fill='none'><path d='M12.2 1.2H20.6L13.7 12.9H22.5L7.2 28.7H3.4L10 17.7H1.2Z' fill='#8fc3ef' stroke='#1f6fc5' stroke-width='1.3' stroke-linejoin='miter'/></svg>
<div style='position:absolute;left:1147.5px;top:104.0px;line-height:17px;font-family:"Liberation Sans", sans-serif;font-size:13px;font-weight:normal;color:#333;white-space:pre;transform:scaleX(0.7308);transform-origin:0 0;'>アイ</div>
<div style='position:absolute;left:1146px;top:118.8px;line-height:17px;font-family:"Liberation Sans", sans-serif;font-size:13px;font-weight:normal;color:#333;white-space:pre;transform:scaleX(0.7885);transform-origin:0 0;'>デア</div>
<svg style='position:absolute;left:1202px;top:68px;' width='32' height='33' viewBox='0 0 32 33' fill='none'><path d='M22.5 19V31.5H2.5V4.5H17' stroke='#b8b8b8' stroke-width='1.2' fill='#ececec'/><g transform='rotate(-45 17.5 14.5)'><rect x='3.5' y='10' width='12' height='9' rx='1' fill='#f0f0f0' stroke='#b8b8b8' stroke-width='1.1'/><rect x='6' y='13' width='7' height='3' stroke='#b8b8b8' stroke-width='1'/><rect x='17' y='9.5' width='3' height='10' fill='#b8b8b8'/><rect x='20' y='10' width='5' height='9' fill='#f0f0f0' stroke='#b8b8b8' stroke-width='1.1'/><rect x='25' y='11.5' width='6' height='6' fill='#f0f0f0' stroke='#b8b8b8' stroke-width='1.1'/></g></svg>
<div style='position:absolute;left:1202px;top:104.0px;line-height:17px;font-family:"Liberation Sans", sans-serif;font-size:13px;font-weight:normal;color:#a6a6a6;white-space:pre;transform:scaleX(0.9808);transform-origin:0 0;'>秘密</div>
<div style='position:absolute;left:1202px;top:118.8px;line-height:17px;font-family:"Liberation Sans", sans-serif;font-size:13px;font-weight:normal;color:#a6a6a6;white-space:pre;transform:scaleX(1.0769);transform-origin:0 0;'>度</div>
<svg style='position:absolute;left:1218.5px;top:125px;' width='7.5' height='5.2' viewBox='0 0 7.5 5.2' fill='none'><polyline points='1,1 3.75,4.2 6.5,1' stroke='#b0b0b0' stroke-width='1.2' fill='none'/></svg>
<div style='position:absolute;left:0px;top:161px;width:1366px;height:52px;background:#e6e6e6;'></div>
<div style='position:absolute;left:0;top:161px;width:1366px;height:7px;background:linear-gradient(#d2d2d2,#e6e6e6)'></div>
<div style='position:absolute;left:5px;top:172px;width:102px;height:31px;box-sizing:border-box;border:1px solid #c6c6c6;background:#ffffff;'></div>
<div style='position:absolute;left:11.5px;top:179.5px;line-height:20px;font-family:"Liberation Sans", sans-serif;font-size:15.5px;font-weight:normal;color:#333333;white-space:pre;transform:scaleX(0.9582);transform-origin:0 0;'>C6</div>
<svg style='position:absolute;left:92px;top:184px;' width='9' height='6' viewBox='0 0 9 6' fill='none'><path d='M0.5 0.5H8.5L4.5 5Z' fill='#555'/></svg>
<div style='position:absolute;left:121px;top:182px;width:1.5px;height:1.5px;background:#9a9a9a;'></div>
<div style='position:absolute;left:121px;top:186px;width:1.5px;height:1.5px;background:#9a9a9a;'></div>
<div style='position:absolute;left:121px;top:190px;width:1.5px;height:1.5px;background:#9a9a9a;'></div>
<div style='position:absolute;left:137px;top:172px;width:110px;height:31px;box-sizing:border-box;border:1px solid #c6c6c6;background:#ffffff;'></div>
<svg style='position:absolute;left:150px;top:182px;' width='12' height='11' viewBox='0 0 12 11' fill='none'><path d='M1 1L11 10M11 1L1 10' stroke='#c4c4c4' stroke-width='1.5'/></svg>
<svg style='position:absolute;left:185px;top:181px;' width='15' height='13' viewBox='0 0 15 13' fill='none'><path d='M1.5 6.5L5.5 11L13.5 1.5' stroke='#c4c4c4' stroke-width='1.9'/></svg>
<svg style='position:absolute;left:221px;top:180px;' width='14' height='14' viewBox='0 0 14 14' fill='none'><path d='M7.5 1.6C6 1.2 5 2 4.6 3.8L2.8 11.2C2.4 12.6 1.7 13 0.8 12.8' stroke='#3a3a3a' stroke-width='1.4'/><path d='M2.8 5.3H6.6' stroke='#3a3a3a' stroke-width='1.2'/><path d='M6.8 6.5C7.8 6.3 8.3 7 8.8 8.3L9.8 10.8C10.2 11.8 10.8 12 12.5 11.3M12.6 6.6C11.6 6.4 10.5 7.8 9.3 9.5C8 11.3 7.3 11.7 6.3 11.3' stroke='#3a3a3a' stroke-width='1.3'/></svg>
<div style='position:absolute;left:250px;top:172px;width:1111px;height:31px;box-sizing:border-box;border:1px solid #c6c6c6;background:#ffffff;'></div>
<div style='position:absolute;left:262.5px;top:178.5px;line-height:19px;font-family:"Liberation Sans", sans-serif;font-size:14.67px;font-weight:normal;color:#262626;white-space:pre;transform:scaleX(1.0314);transform-origin:0 0;'>=PHONETIC(B6)</div>
<svg style='position:absolute;left:1348px;top:184px;' width='9' height='6.5' viewBox='0 0 9 6.5' fill='none'><polyline points='1,1 4.5,5.5 8,1' stroke='#555' stroke-width='1.6' fill='none'/></svg>
<div style='position:absolute;left:0px;top:213px;width:1344px;height:25px;background:#e6e6e6;'></div>
<div style='position:absolute;left:0px;top:238px;width:29px;height:440px;background:#e6e6e6;'></div>
<svg style='position:absolute;left:9px;top:219px;' width='16' height='16' viewBox='0 0 16 16' fill='none'><path d='M15 1V15H1Z' fill='#b4b4b4'/></svg>
<div style='position:absolute;left:29px;top:238px;width:1315px;height:440px;background:#ffffff;'></div>
<div style='position:absolute;left:205px;top:213px;width:170px;height:24px;background:#d2d2d2;'></div>
<div style='position:absolute;left:204px;top:236px;width:172px;height:2px;background:#217346;'></div>
<div style='position:absolute;left:0px;top:363px;width:28px;height:24px;background:#d2d2d2;'></div>
<div style='position:absolute;left:27px;top:362px;width:2px;height:26px;background:#217346;'></div>
<div style='position:absolute;left:100px;top:213px;width:1px;height:24px;background:#ababab;'></div>
<div style='position:absolute;left:204px;top:213px;width:1px;height:24px;background:#ababab;'></div>
<div style='position:absolute;left:375px;top:213px;width:1px;height:24px;background:#ababab;'></div>
<div style='position:absolute;left:466px;top:213px;width:1px;height:24px;background:#ababab;'></div>
<div style='position:absolute;left:541px;top:213px;width:1px;height:24px;background:#ababab;'></div>
<div style='position:absolute;left:795px;top:213px;width:1px;height:24px;background:#ababab;'></div>
<div style='position:absolute;left:870px;top:213px;width:1px;height:24px;background:#ababab;'></div>
<div style='position:absolute;left:1084px;top:213px;width:1px;height:24px;background:#ababab;'></div>
<div style='position:absolute;left:1194px;top:213px;width:1px;height:24px;background:#ababab;'></div>
<div style='position:absolute;left:1264px;top:213px;width:1px;height:24px;background:#ababab;'></div>
<div style='position:absolute;left:1335px;top:213px;width:1px;height:24px;background:#ababab;'></div>
<div style='position:absolute;left:0px;top:237px;width:1344px;height:1px;background:#ababab;'></div>
<div style='position:absolute;left:204px;top:236px;width:172px;height:2px;background:#217346;'></div>
<div style='position:absolute;left:28px;top:213px;width:1px;height:465px;background:#ababab;'></div>
<div style='position:absolute;left:0px;top:262px;width:28px;height:1px;background:#c0c0c0;'></div>
<div style='position:absolute;left:0px;top:287px;width:28px;height:1px;background:#c0c0c0;'></div>
<div style='position:absolute;left:0px;top:312px;width:28px;height:1px;background:#c0c0c0;'></div>
<div style='position:absolute;left:0px;top:337px;width:28px;height:1px;background:#c0c0c0;'></div>
<div style='position:absolute;left:0px;top:362px;width:28px;height:1px;background:#c0c0c0;'></div>
<div style='position:absolute;left:0px;top:387px;width:28px;height:1px;background:#c0c0c0;'></div>
<div style='position:absolute;left:0px;top:412px;width:28px;height:1px;background:#c0c0c0;'></div>
<div style='position:absolute;left:0px;top:437px;width:28px;height:1px;background:#c0c0c0;'></div>
<div style='position:absolute;left:0px;top:462px;width:28px;height:1px;background:#c0c0c0;'></div>
<div style='position:absolute;left:0px;top:487px;width:28px;height:1px;background:#c0c0c0;'></div>
<div style='position:absolute;left:0px;top:512px;width:28px;height:1px;background:#c0c0c0;'></div>
<div style='position:absolute;left:0px;top:537px;width:28px;height:1px;background:#c0c0c0;'></div>
<div style='position:absolute;left:0px;top:562px;width:28px;height:1px;background:#c0c0c0;'></div>
<div style='position:absolute;left:0px;top:587px;width:28px;height:1px;background:#c0c0c0;'></div>
<div style='position:absolute;left:0px;top:612px;width:28px;height:1px;background:#c0c0c0;'></div>
<div style='position:absolute;left:0px;top:637px;width:28px;height:1px;background:#c0c0c0;'></div>
<div style='position:absolute;left:0px;top:662px;width:28px;height:1px;background:#c0c0c0;'></div>
<div style='position:absolute;left:27px;top:362px;width:2px;height:26px;background:#217346;'></div>
<div style='position:absolute;left:100px;top:238px;width:1px;height:440px;background:#d4d4d4;'></div>
<div style='position:absolute;left:204px;top:238px;width:1px;height:440px;background:#d4d4d4;'></div>
<div style='position:absolute;left:375px;top:238px;width:1px;height:440px;background:#d4d4d4;'></div>
<div style='position:absolute;left:466px;top:238px;width:1px;height:440px;background:#d4d4d4;'></div>
<div style='position:absolute;left:541px;top:238px;width:1px;height:440px;background:#d4d4d4;'></div>
<div style='position:absolute;left:795px;top:238px;width:1px;height:440px;background:#d4d4d4;'></div>
<div style='position:absolute;left:870px;top:238px;width:1px;height:440px;background:#d4d4d4;'></div>
<div style='position:absolute;left:1084px;top:238px;width:1px;height:440px;background:#d4d4d4;'></div>
<div style='position:absolute;left:1194px;top:238px;width:1px;height:440px;background:#d4d4d4;'></div>
<div style='position:absolute;left:1264px;top:238px;width:1px;height:440px;background:#d4d4d4;'></div>
<div style='position:absolute;left:1335px;top:238px;width:1px;height:440px;background:#d4d4d4;'></div>
<div style='position:absolute;left:29px;top:262px;width:1315px;height:1px;background:#d4d4d4;'></div>
<div style='position:absolute;left:29px;top:287px;width:1315px;height:1px;background:#d4d4d4;'></div>
<div style='position:absolute;left:29px;top:312px;width:1315px;height:1px;background:#d4d4d4;'></div>
<div style='position:absolute;left:29px;top:337px;width:1315px;height:1px;background:#d4d4d4;'></div>
<div style='position:absolute;left:29px;top:362px;width:1315px;height:1px;background:#d4d4d4;'></div>
<div style='position:absolute;left:29px;top:387px;width:1315px;height:1px;background:#d4d4d4;'></div>
<div style='position:absolute;left:29px;top:412px;width:1315px;height:1px;background:#d4d4d4;'></div>
<div style='position:absolute;left:29px;top:437px;width:1315px;height:1px;background:#d4d4d4;'></div>
<div style='position:absolute;left:29px;top:462px;width:1315px;height:1px;background:#d4d4d4;'></div>
<div style='position:absolute;left:29px;top:487px;width:1315px;height:1px;background:#d4d4d4;'></div>
<div style='position:absolute;left:29px;top:512px;width:1315px;height:1px;background:#d4d4d4;'></div>
<div style='position:absolute;left:29px;top:537px;width:1315px;height:1px;background:#d4d4d4;'></div>
<div style='position:absolute;left:29px;top:562px;width:1315px;height:1px;background:#d4d4d4;'></div>
<div style='position:absolute;left:29px;top:587px;width:1315px;height:1px;background:#d4d4d4;'></div>
<div style='position:absolute;left:29px;top:612px;width:1315px;height:1px;background:#d4d4d4;'></div>
<div style='position:absolute;left:29px;top:637px;width:1315px;height:1px;background:#d4d4d4;'></div>
<div style='position:absolute;left:29px;top:662px;width:1315px;height:1px;background:#d4d4d4;'></div>
<div style='position:absolute;left:28px;top:213px;width:72px;height:24px;line-height:24px;text-align:center;font-family:"Liberation Sans", sans-serif;font-size:14.67px;color:#262626'>A</div>
<div style='position:absolute;left:100px;top:213px;width:104px;height:24px;line-height:24px;text-align:center;font-family:"Liberation Sans", sans-serif;font-size:14.67px;color:#262626'>B</div>
<div style='position:absolute;left:204px;top:213px;width:171px;height:24px;line-height:24px;text-align:center;font-family:"Liberation Sans", sans-serif;font-size:14.67px;color:#217346'>C</div>
<div style='position:absolute;left:375px;top:213px;width:91px;height:24px;line-height:24px;text-align:center;font-family:"Liberation Sans", sans-serif;font-size:14.67px;color:#262626'>D</div>
<div style='position:absolute;left:466px;top:213px;width:75px;height:24px;line-height:24px;text-align:center;font-family:"Liberation Sans", sans-serif;font-size:14.67px;color:#262626'>E</div>
<div style='position:absolute;left:541px;top:213px;width:254px;height:24px;line-height:24px;text-align:center;font-family:"Liberation Sans", sans-serif;font-size:14.67px;color:#262626'>F</div>
<div style='position:absolute;left:795px;top:213px;width:75px;height:24px;line-height:24px;text-align:center;font-family:"Liberation Sans", sans-serif;font-size:14.67px;color:#262626'>G</div>
<div style='position:absolute;left:870px;top:213px;width:214px;height:24px;line-height:24px;text-align:center;font-family:"Liberation Sans", sans-serif;font-size:14.67px;color:#262626'>H</div>
<div style='position:absolute;left:1084px;top:213px;width:110px;height:24px;line-height:24px;text-align:center;font-family:"Liberation Sans", sans-serif;font-size:14.67px;color:#262626'>I</div>
<div style='position:absolute;left:1194px;top:213px;width:70px;height:24px;line-height:24px;text-align:center;font-family:"Liberation Sans", sans-serif;font-size:14.67px;color:#262626'>J</div>
<div style='position:absolute;left:1264px;top:213px;width:71px;height:24px;line-height:24px;text-align:center;font-family:"Liberation Sans", sans-serif;font-size:14.67px;color:#262626'>K</div>
<div style='position:absolute;left:0;top:238px;width:28px;height:24px;line-height:24px;text-align:center;font-family:"Liberation Sans", sans-serif;font-size:14.67px;color:#262626'>1</div>
<div style='position:absolute;left:0;top:263px;width:28px;height:24px;line-height:24px;text-align:center;font-family:"Liberation Sans", sans-serif;font-size:14.67px;color:#262626'>2</div>
<div style='position:absolute;left:0;top:288px;width:28px;height:24px;line-height:24px;text-align:center;font-family:"Liberation Sans", sans-serif;font-size:14.67px;color:#262626'>3</div>
<div style='position:absolute;left:0;top:313px;width:28px;height:24px;line-height:24px;text-align:center;font-family:"Liberation Sans", sans-serif;font-size:14.67px;color:#262626'>4</div>
<div style='position:absolute;left:0;top:338px;width:28px;height:24px;line-height:24px;text-align:center;font-family:"Liberation Sans", sans-serif;font-size:14.67px;color:#262626'>5</div>
<div style='position:absolute;left:0;top:363px;width:28px;height:24px;line-height:24px;text-align:center;font-family:"Liberation Sans", sans-serif;font-size:14.67px;color:#217346'>6</div>
<div style='position:absolute;left:0;top:388px;width:28px;height:24px;line-height:24px;text-align:center;font-family:"Liberation Sans", sans-serif;font-size:14.67px;color:#262626'>7</div>
<div style='position:absolute;left:0;top:413px;width:28px;height:24px;line-height:24px;text-align:center;font-family:"Liberation Sans", sans-serif;font-size:14.67px;color:#262626'>8</div>
<div style='position:absolute;left:0;top:438px;width:28px;height:24px;line-height:24px;text-align:center;font-family:"Liberation Sans", sans-serif;font-size:14.67px;color:#262626'>9</div>
<div style='position:absolute;left:0;top:463px;width:28px;height:24px;line-height:24px;text-align:center;font-family:"Liberation Sans", sans-serif;font-size:14.67px;color:#262626'>10</div>
<div style='position:absolute;left:0;top:488px;width:28px;height:24px;line-height:24px;text-align:center;font-family:"Liberation Sans", sans-serif;font-size:14.67px;color:#262626'>11</div>
<div style='position:absolute;left:0;top:513px;width:28px;height:24px;line-height:24px;text-align:center;font-family:"Liberation Sans", sans-serif;font-size:14.67px;color:#262626'>12</div>
<div style='position:absolute;left:0;top:538px;width:28px;height:24px;line-height:24px;text-align:center;font-family:"Liberation Sans", sans-serif;font-size:14.67px;color:#262626'>13</div>
<div style='position:absolute;left:0;top:563px;width:28px;height:24px;line-height:24px;text-align:center;font-family:"Liberation Sans", sans-serif;font-size:14.67px;color:#262626'>14</div>
<div style='position:absolute;left:0;top:588px;width:28px;height:24px;line-height:24px;text-align:center;font-family:"Liberation Sans", sans-serif;font-size:14.67px;color:#262626'>15</div>
<div style='position:absolute;left:0;top:613px;width:28px;height:24px;line-height:24px;text-align:center;font-family:"Liberation Sans", sans-serif;font-size:14.67px;color:#262626'>16</div>
<div style='position:absolute;left:0;top:638px;width:28px;height:24px;line-height:24px;text-align:center;font-family:"Liberation Sans", sans-serif;font-size:14.67px;color:#262626'>17</div>
<div style='position:absolute;left:0;top:663px;width:28px;height:24px;line-height:24px;text-align:center;font-family:"Liberation Sans", sans-serif;font-size:14.67px;color:#262626'>18</div>
<div style='position:absolute;left:100px;top:238px;width:1px;height:24px;background:#ffffff;'></div>
<div style='position:absolute;left:29px;top:263px;width:1165px;height:24px;background:#efc06e;'></div>
<div style='position:absolute;left:28px;top:262px;width:1px;height:326px;background:#000000;'></div>
<div style='position:absolute;left:100px;top:262px;width:1px;height:326px;background:#000000;'></div>
<div style='position:absolute;left:204px;top:262px;width:1px;height:326px;background:#000000;'></div>
<div style='position:absolute;left:375px;top:262px;width:1px;height:326px;background:#000000;'></div>
<div style='position:absolute;left:466px;top:262px;width:1px;height:326px;background:#000000;'></div>
<div style='position:absolute;left:541px;top:262px;width:1px;height:326px;background:#000000;'></div>
<div style='position:absolute;left:795px;top:262px;width:1px;height:326px;background:#000000;'></div>
<div style='position:absolute;left:870px;top:262px;width:1px;height:326px;background:#000000;'></div>
<div style='position:absolute;left:1084px;top:262px;width:1px;height:326px;background:#000000;'></div>
<div style='position:absolute;left:1194px;top:262px;width:1px;height:326px;background:#000000;'></div>
<div style='position:absolute;left:28px;top:262px;width:1167px;height:1px;background:#000000;'></div>
<div style='position:absolute;left:28px;top:287px;width:1167px;height:1px;background:#000000;'></div>
<div style='position:absolute;left:28px;top:312px;width:1167px;height:1px;background:#000000;'></div>
<div style='position:absolute;left:28px;top:337px;width:1167px;height:1px;background:#000000;'></div>
<div style='position:absolute;left:28px;top:362px;width:1167px;height:1px;background:#000000;'></div>
<div style='position:absolute;left:28px;top:387px;width:1167px;height:1px;background:#000000;'></div>
<div style='position:absolute;left:28px;top:412px;width:1167px;height:1px;background:#000000;'></div>
<div style='position:absolute;left:28px;top:437px;width:1167px;height:1px;background:#000000;'></div>
<div style='position:absolute;left:28px;top:462px;width:1167px;height:1px;background:#000000;'></div>
<div style='position:absolute;left:28px;top:487px;width:1167px;height:1px;background:#000000;'></div>
<div style='position:absolute;left:28px;top:512px;width:1167px;height:1px;background:#000000;'></div>
<div style='position:absolute;left:28px;top:537px;width:1167px;height:1px;background:#000000;'></div>
<div style='position:absolute;left:28px;top:562px;width:1167px;height:1px;background:#000000;'></div>
<div style='position:absolute;left:28px;top:587px;width:1167px;height:1px;background:#000000;'></div>
<div style='position:absolute;left:29px;top:238px;width:71px;height:24px;box-sizing:border-box;padding-left:2px;line-height:24px;text-align:left;font-family:"Liberation Sans", sans-serif;font-size:15px;font-weight:bold;color:#000000;white-space:nowrap;overflow:visible'>エクセル入門受講者一覧</div>
<div style='position:absolute;left:29px;top:263px;width:71px;height:24px;box-sizing:border-box;line-height:24px;text-align:center;font-family:"Liberation Sans", sans-serif;font-size:15px;font-weight:normal;color:#000000;white-space:nowrap;overflow:visible'>会員番号</div>
<div style='position:absolute;left:101px;top:263px;width:103px;height:24px;box-sizing:border-box;line-height:24px;text-align:center;font-family:"Liberation Sans", sans-serif;font-size:15px;font-weight:normal;color:#000000;white-space:nowrap;overflow:visible'>氏名</div>
<div style='position:absolute;left:205px;top:263px;width:170px;height:24px;box-sizing:border-box;line-height:24px;text-align:center;font-family:"Liberation Sans", sans-serif;font-size:15px;font-weight:normal;color:#000000;white-space:nowrap;overflow:visible'>フリガナ</div>
<div style='position:absolute;left:376px;top:263px;width:90px;height:24px;box-sizing:border-box;line-height:24px;text-align:center;font-family:"Liberation Sans", sans-serif;font-size:15px;font-weight:normal;color:#000000;white-space:nowrap;overflow:visible'>生年月日</div>
<div style='position:absolute;left:467px;top:263px;width:74px;height:24px;box-sizing:border-box;line-height:24px;text-align:center;font-family:"Liberation Sans", sans-serif;font-size:15px;font-weight:normal;color:#000000;white-space:nowrap;overflow:visible'>郵便番号</div>
<div style='position:absolute;left:542px;top:263px;width:253px;height:24px;box-sizing:border-box;line-height:24px;text-align:center;font-family:"Liberation Sans", sans-serif;font-size:15px;font-weight:normal;color:#000000;white-space:nowrap;overflow:visible'>住所</div>
<div style='position:absolute;left:796px;top:263px;width:74px;height:24px;box-sizing:border-box;line-height:24px;text-align:center;font-family:"Liberation Sans", sans-serif;font-size:15px;font-weight:normal;color:#000000;white-space:nowrap;overflow:visible'>番地</div>
<div style='position:absolute;left:871px;top:263px;width:213px;height:24px;box-sizing:border-box;line-height:24px;text-align:center;font-family:"Liberation Sans", sans-serif;font-size:15px;font-weight:normal;color:#000000;white-space:nowrap;overflow:visible'>マンション・部屋番号</div>
<div style='position:absolute;left:1085px;top:263px;width:109px;height:24px;box-sizing:border-box;line-height:24px;text-align:center;font-family:"Liberation Sans", sans-serif;font-size:15px;font-weight:normal;color:#000000;white-space:nowrap;overflow:visible'>電話番号</div>
<div style='position:absolute;left:29px;top:288px;width:71px;height:24px;box-sizing:border-box;padding-left:2px;line-height:24px;text-align:left;font-family:"Liberation Sans", sans-serif;font-size:15px;font-weight:normal;color:#000000;white-space:nowrap;overflow:visible'>1001</div>
<div style='position:absolute;left:101px;top:288px;width:103px;height:24px;box-sizing:border-box;padding-left:2px;line-height:24px;text-align:left;font-family:"Liberation Sans", sans-serif;font-size:15px;font-weight:normal;color:#000000;white-space:nowrap;overflow:visible'>大田原　陽子</div>
<div style='position:absolute;left:205px;top:288px;width:170px;height:24px;box-sizing:border-box;padding-left:2px;line-height:24px;text-align:left;font-family:"Liberation Sans", sans-serif;font-size:15px;font-weight:normal;color:#000000;white-space:nowrap;overflow:visible'>オオタワラ　ヨウコ</div>
<div style='position:absolute;left:376px;top:288px;width:90px;height:24px;box-sizing:border-box;padding-right:1px;letter-spacing:0.55px;line-height:24px;text-align:right;font-family:"Liberation Sans", sans-serif;font-size:15px;font-weight:normal;color:#000000;white-space:nowrap;overflow:visible'>1958/3/12</div>
<div style='position:absolute;left:467px;top:288px;width:74px;height:24px;box-sizing:border-box;padding-left:2px;line-height:24px;text-align:left;font-family:"Liberation Sans", sans-serif;font-size:15px;font-weight:normal;color:#000000;white-space:nowrap;overflow:visible'>162-0041</div>
<div style='position:absolute;left:542px;top:288px;width:253px;height:24px;box-sizing:border-box;padding-left:2px;line-height:24px;text-align:left;font-family:"Liberation Sans", sans-serif;font-size:15px;font-weight:normal;color:#000000;white-space:nowrap;overflow:visible'>東京都新宿区早稲田鶴巻町</div>
<div style='position:absolute;left:796px;top:288px;width:74px;height:24px;box-sizing:border-box;padding-left:2px;line-height:24px;text-align:left;font-family:"Liberation Sans", sans-serif;font-size:15px;font-weight:normal;color:#000000;white-space:nowrap;overflow:visible'>XXXX-X</div>
<div style='position:absolute;left:871px;top:288px;width:213px;height:24px;box-sizing:border-box;padding-left:2px;line-height:24px;text-align:left;font-family:"Liberation Sans", sans-serif;font-size:15px;font-weight:normal;color:#000000;white-space:nowrap;overflow:visible'>三ノ輪マンションXXX</div>
<div style='position:absolute;left:1085px;top:288px;width:109px;height:24px;box-sizing:border-box;padding-left:2px;line-height:24px;text-align:left;font-family:"Liberation Sans", sans-serif;font-size:15px;font-weight:normal;color:#000000;white-space:nowrap;overflow:visible'>0354XXXXXX</div>
<div style='position:absolute;left:29px;top:313px;width:71px;height:24px;box-sizing:border-box;padding-left:2px;line-height:24px;text-align:left;font-family:"Liberation Sans", sans-serif;font-size:15px;font-weight:normal;color:#000000;white-space:nowrap;overflow:visible'>1002</div>
<div style='position:absolute;left:101px;top:313px;width:103px;height:24px;box-sizing:border-box;padding-left:2px;line-height:24px;text-align:left;font-family:"Liberation Sans", sans-serif;font-size:15px;font-weight:normal;color:#000000;white-space:nowrap;overflow:visible'>市原　君江</div>
<div style='position:absolute;left:205px;top:313px;width:170px;height:24px;box-sizing:border-box;padding-left:2px;line-height:24px;text-align:left;font-family:"Liberation Sans", sans-serif;font-size:15px;font-weight:normal;color:#000000;white-space:nowrap;overflow:visible'>イチハラ　キミエ</div>
<div style='position:absolute;left:376px;top:313px;width:90px;height:24px;box-sizing:border-box;padding-right:1px;letter-spacing:0.55px;line-height:24px;text-align:right;font-family:"Liberation Sans", sans-serif;font-size:15px;font-weight:normal;color:#000000;white-space:nowrap;overflow:visible'>1964/10/4</div>
<div style='position:absolute;left:467px;top:313px;width:74px;height:24px;box-sizing:border-box;padding-left:2px;line-height:24px;text-align:left;font-family:"Liberation Sans", sans-serif;font-size:15px;font-weight:normal;color:#000000;white-space:nowrap;overflow:visible'>226-0026</div>
<div style='position:absolute;left:542px;top:313px;width:253px;height:24px;box-sizing:border-box;padding-left:2px;line-height:24px;text-align:left;font-family:"Liberation Sans", sans-serif;font-size:15px;font-weight:normal;color:#000000;white-space:nowrap;overflow:visible'>神奈川県横浜市緑区長津田町</div>
<div style='position:absolute;left:796px;top:313px;width:74px;height:24px;box-sizing:border-box;padding-left:2px;line-height:24px;text-align:left;font-family:"Liberation Sans", sans-serif;font-size:15px;font-weight:normal;color:#000000;white-space:nowrap;overflow:visible'>1-1-X</div>
<div style='position:absolute;left:1085px;top:313px;width:109px;height:24px;box-sizing:border-box;padding-left:2px;line-height:24px;text-align:left;font-family:"Liberation Sans", sans-serif;font-size:15px;font-weight:normal;color:#000000;white-space:nowrap;overflow:visible'>045XXXXXXX</div>
<div style='position:absolute;left:29px;top:338px;width:71px;height:24px;box-sizing:border-box;padding-left:2px;line-height:24px;text-align:left;font-family:"Liberation Sans", sans-serif;font-size:15px;font-weight:normal;color:#000000;white-space:nowrap;overflow:visible'>1003</div>
<div style='position:absolute;left:101px;top:338px;width:103px;height:24px;box-sizing:border-box;padding-left:2px;line-height:24px;text-align:left;font-family:"Liberation Sans", sans-serif;font-size:15px;font-weight:normal;color:#000000;white-space:nowrap;overflow:visible'>大河内　武久</div>
<div style='position:absolute;left:205px;top:338px;width:170px;height:24px;box-sizing:border-box;padding-left:2px;line-height:24px;text-align:left;font-family:"Liberation Sans", sans-serif;font-size:15px;font-weight:normal;color:#000000;white-space:nowrap;overflow:visible'>オオコウチ　タケヒサ</div>
<div style='position:absolute;left:376px;top:338px;width:90px;height:24px;box-sizing:border-box;padding-right:1px;letter-spacing:0.55px;line-height:24px;text-align:right;font-family:"Liberation Sans", sans-serif;font-size:15px;font-weight:normal;color:#000000;white-space:nowrap;overflow:visible'>1985/5/18</div>
<div style='position:absolute;left:467px;top:338px;width:74px;height:24px;box-sizing:border-box;padding-left:2px;line-height:24px;text-align:left;font-family:"Liberation Sans", sans-serif;font-size:15px;font-weight:normal;color:#000000;white-space:nowrap;overflow:visible'>252-0222</div>
<div style='position:absolute;left:542px;top:338px;width:253px;height:24px;box-sizing:border-box;padding-left:2px;line-height:24px;text-align:left;font-family:"Liberation Sans", sans-serif;font-size:15px;font-weight:normal;color:#000000;white-space:nowrap;overflow:visible'>神奈川県相模原市中央区由野台</div>
<div style='position:absolute;left:796px;top:338px;width:74px;height:24px;box-sizing:border-box;padding-left:2px;line-height:24px;text-align:left;font-family:"Liberation Sans", sans-serif;font-size:15px;font-weight:normal;color:#000000;white-space:nowrap;overflow:visible'>X-X-X</div>
<div style='position:absolute;left:871px;top:338px;width:213px;height:24px;box-sizing:border-box;padding-left:2px;line-height:24px;text-align:left;font-family:"Liberation Sans", sans-serif;font-size:15px;font-weight:normal;color:#000000;white-space:nowrap;overflow:visible'>コーポコスモXXX</div>
<div style='position:absolute;left:1085px;top:338px;width:109px;height:24px;box-sizing:border-box;padding-left:2px;line-height:24px;text-align:left;font-family:"Liberation Sans", sans-serif;font-size:15px;font-weight:normal;color:#000000;white-space:nowrap;overflow:visible'>042XXXXXXX</div>
<div style='position:absolute;left:29px;top:363px;width:71px;height:24px;box-sizing:border-box;padding-left:2px;line-height:24px;text-align:left;font-family:"Liberation Sans", sans-serif;font-size:15px;font-weight:normal;color:#000000;white-space:nowrap;overflow:visible'>1004</div>
<div style='position:absolute;left:101px;top:363px;width:103px;height:24px;box-sizing:border-box;padding-left:2px;line-height:24px;text-align:left;font-family:"Liberation Sans", sans-serif;font-size:15px;font-weight:normal;color:#000000;white-space:nowrap;overflow:visible'>香川　恵美</div>
<div style='position:absolute;left:205px;top:363px;width:170px;height:24px;box-sizing:border-box;padding-left:2px;line-height:24px;text-align:left;font-family:"Liberation Sans", sans-serif;font-size:15px;font-weight:normal;color:#000000;white-space:nowrap;overflow:visible'>カガワ　エミ</div>
<div style='position:absolute;left:376px;top:363px;width:90px;height:24px;box-sizing:border-box;padding-right:1px;letter-spacing:0.55px;line-height:24px;text-align:right;font-family:"Liberation Sans", sans-serif;font-size:15px;font-weight:normal;color:#000000;white-space:nowrap;overflow:visible'>1963/11/18</div>
<div style='position:absolute;left:467px;top:363px;width:74px;height:24px;box-sizing:border-box;padding-left:2px;line-height:24px;text-align:left;font-family:"Liberation Sans", sans-serif;font-size:15px;font-weight:normal;color:#000000;white-space:nowrap;overflow:visible'>690-0873</div>
<div style='position:absolute;left:542px;top:363px;width:253px;height:24px;box-sizing:border-box;padding-left:2px;line-height:24px;text-align:left;font-family:"Liberation Sans", sans-serif;font-size:15px;font-weight:normal;color:#000000;white-space:nowrap;overflow:visible'>島根県松江市内中原町</div>
<div style='position:absolute;left:796px;top:363px;width:74px;height:24px;box-sizing:border-box;padding-left:2px;line-height:24px;text-align:left;font-family:"Liberation Sans", sans-serif;font-size:15px;font-weight:normal;color:#000000;white-space:nowrap;overflow:visible'>X-XX</div>
<div style='position:absolute;left:1085px;top:363px;width:109px;height:24px;box-sizing:border-box;padding-left:2px;line-height:24px;text-align:left;font-family:"Liberation Sans", sans-serif;font-size:15px;font-weight:normal;color:#000000;white-space:nowrap;overflow:visible'>0852XXXXXX</div>
<div style='position:absolute;left:29px;top:388px;width:71px;height:24px;box-sizing:border-box;padding-left:2px;line-height:24px;text-align:left;font-family:"Liberation Sans", sans-serif;font-size:15px;font-weight:normal;color:#000000;white-space:nowrap;overflow:visible'>1005</div>
<div style='position:absolute;left:101px;top:388px;width:103px;height:24px;box-sizing:border-box;padding-left:2px;line-height:24px;text-align:left;font-family:"Liberation Sans", sans-serif;font-size:15px;font-weight:normal;color:#000000;white-space:nowrap;overflow:visible'>木村　由利子</div>
<div style='position:absolute;left:205px;top:388px;width:170px;height:24px;box-sizing:border-box;padding-left:2px;line-height:24px;text-align:left;font-family:"Liberation Sans", sans-serif;font-size:15px;font-weight:normal;color:#000000;white-space:nowrap;overflow:visible'>キムラ　ユリコ</div>
<div style='position:absolute;left:376px;top:388px;width:90px;height:24px;box-sizing:border-box;padding-right:1px;letter-spacing:0.55px;line-height:24px;text-align:right;font-family:"Liberation Sans", sans-serif;font-size:15px;font-weight:normal;color:#000000;white-space:nowrap;overflow:visible'>1964/8/5</div>
<div style='position:absolute;left:467px;top:388px;width:74px;height:24px;box-sizing:border-box;padding-left:2px;line-height:24px;text-align:left;font-family:"Liberation Sans", sans-serif;font-size:15px;font-weight:normal;color:#000000;white-space:nowrap;overflow:visible'>812-0053</div>
<div style='position:absolute;left:542px;top:388px;width:253px;height:24px;box-sizing:border-box;padding-left:2px;line-height:24px;text-align:left;font-family:"Liberation Sans", sans-serif;font-size:15px;font-weight:normal;color:#000000;white-space:nowrap;overflow:visible'>福岡県福岡市東区箱崎</div>
<div style='position:absolute;left:796px;top:388px;width:74px;height:24px;box-sizing:border-box;padding-left:2px;line-height:24px;text-align:left;font-family:"Liberation Sans", sans-serif;font-size:15px;font-weight:normal;color:#000000;white-space:nowrap;overflow:visible'>2-1X-X</div>
<div style='position:absolute;left:871px;top:388px;width:213px;height:24px;box-sizing:border-box;padding-left:2px;line-height:24px;text-align:left;font-family:"Liberation Sans", sans-serif;font-size:15px;font-weight:normal;color:#000000;white-space:nowrap;overflow:visible'>箱崎コーポXXX</div>
<div style='position:absolute;left:1085px;top:388px;width:109px;height:24px;box-sizing:border-box;padding-left:2px;line-height:24px;text-align:left;font-family:"Liberation Sans", sans-serif;font-size:15px;font-weight:normal;color:#000000;white-space:nowrap;overflow:visible'>092XXXXXXX</div>
<div style='position:absolute;left:29px;top:413px;width:71px;height:24px;box-sizing:border-box;padding-left:2px;line-height:24px;text-align:left;font-family:"Liberation Sans", sans-serif;font-size:15px;font-weight:normal;color:#000000;white-space:nowrap;overflow:visible'>1006</div>
<div style='position:absolute;left:101px;top:413px;width:103px;height:24px;box-sizing:border-box;padding-left:2px;line-height:24px;text-align:left;font-family:"Liberation Sans", sans-serif;font-size:15px;font-weight:normal;color:#000000;white-space:nowrap;overflow:visible'>飯泉　昭義</div>
<div style='position:absolute;left:205px;top:413px;width:170px;height:24px;box-sizing:border-box;padding-left:2px;line-height:24px;text-align:left;font-family:"Liberation Sans", sans-serif;font-size:15px;font-weight:normal;color:#000000;white-space:nowrap;overflow:visible'>イイズミ　アキヨシ</div>
<div style='position:absolute;left:376px;top:413px;width:90px;height:24px;box-sizing:border-box;padding-right:1px;letter-spacing:0.55px;line-height:24px;text-align:right;font-family:"Liberation Sans", sans-serif;font-size:15px;font-weight:normal;color:#000000;white-space:nowrap;overflow:visible'>1980/4/26</div>
<div style='position:absolute;left:467px;top:413px;width:74px;height:24px;box-sizing:border-box;padding-left:2px;line-height:24px;text-align:left;font-family:"Liberation Sans", sans-serif;font-size:15px;font-weight:normal;color:#000000;white-space:nowrap;overflow:visible'>060-0812</div>
<div style='position:absolute;left:542px;top:413px;width:253px;height:24px;box-sizing:border-box;padding-left:2px;line-height:24px;text-align:left;font-family:"Liberation Sans", sans-serif;font-size:15px;font-weight:normal;color:#000000;white-space:nowrap;overflow:visible'>北海道札幌市北区北十二条西</div>
<div style='position:absolute;left:796px;top:413px;width:74px;height:24px;box-sizing:border-box;padding-left:2px;line-height:24px;text-align:left;font-family:"Liberation Sans", sans-serif;font-size:15px;font-weight:normal;color:#000000;white-space:nowrap;overflow:visible'>X-X-X</div>
<div style='position:absolute;left:871px;top:413px;width:213px;height:24px;box-sizing:border-box;padding-left:2px;line-height:24px;text-align:left;font-family:"Liberation Sans", sans-serif;font-size:15px;font-weight:normal;color:#000000;white-space:nowrap;overflow:visible'>北ハイムXXX</div>
<div style='position:absolute;left:1085px;top:413px;width:109px;height:24px;box-sizing:border-box;padding-left:2px;line-height:24px;text-align:left;font-family:"Liberation Sans", sans-serif;font-size:15px;font-weight:normal;color:#000000;white-space:nowrap;overflow:visible'>011XXXXXXX</div>
<div style='position:absolute;left:29px;top:438px;width:71px;height:24px;box-sizing:border-box;padding-left:2px;line-height:24px;text-align:left;font-family:"Liberation Sans", sans-serif;font-size:15px;font-weight:normal;color:#000000;white-space:nowrap;overflow:visible'>1007</div>
<div style='position:absolute;left:101px;top:438px;width:103px;height:24px;box-sizing:border-box;padding-left:2px;line-height:24px;text-align:left;font-family:"Liberation Sans", sans-serif;font-size:15px;font-weight:normal;color:#000000;white-space:nowrap;overflow:visible'>西山　平蔵</div>
<div style='position:absolute;left:205px;top:438px;width:170px;height:24px;box-sizing:border-box;padding-left:2px;line-height:24px;text-align:left;font-family:"Liberation Sans", sans-serif;font-size:15px;font-weight:normal;color:#000000;white-space:nowrap;overflow:visible'>ニシヤマ　ヘイゾウ</div>
<div style='position:absolute;left:376px;top:438px;width:90px;height:24px;box-sizing:border-box;padding-right:1px;letter-spacing:0.55px;line-height:24px;text-align:right;font-family:"Liberation Sans", sans-serif;font-size:15px;font-weight:normal;color:#000000;white-space:nowrap;overflow:visible'>1969/7/19</div>
<div style='position:absolute;left:467px;top:438px;width:74px;height:24px;box-sizing:border-box;padding-left:2px;line-height:24px;text-align:left;font-family:"Liberation Sans", sans-serif;font-size:15px;font-weight:normal;color:#000000;white-space:nowrap;overflow:visible'>098-6758</div>
<div style='position:absolute;left:542px;top:438px;width:253px;height:24px;box-sizing:border-box;padding-left:2px;line-height:24px;text-align:left;font-family:"Liberation Sans", sans-serif;font-size:15px;font-weight:normal;color:#000000;white-space:nowrap;overflow:visible'>北海道稚内市宗谷岬</div>
<div style='position:absolute;left:796px;top:438px;width:74px;height:24px;box-sizing:border-box;padding-left:2px;line-height:24px;text-align:left;font-family:"Liberation Sans", sans-serif;font-size:15px;font-weight:normal;color:#000000;white-space:nowrap;overflow:visible'>101-X</div>
<div style='position:absolute;left:1085px;top:438px;width:109px;height:24px;box-sizing:border-box;padding-left:2px;line-height:24px;text-align:left;font-family:"Liberation Sans", sans-serif;font-size:15px;font-weight:normal;color:#000000;white-space:nowrap;overflow:visible'>0162XXXXXX</div>
<div style='position:absolute;left:29px;top:463px;width:71px;height:24px;box-sizing:border-box;padding-left:2px;line-height:24px;text-align:left;font-family:"Liberation Sans", sans-serif;font-size:15px;font-weight:normal;color:#000000;white-space:nowrap;overflow:visible'>1008</div>
<div style='position:absolute;left:101px;top:463px;width:103px;height:24px;box-sizing:border-box;padding-left:2px;line-height:24px;text-align:left;font-family:"Liberation Sans", sans-serif;font-size:15px;font-weight:normal;color:#000000;white-space:nowrap;overflow:visible'>山本　環</div>
<div style='position:absolute;left:205px;top:463px;width:170px;height:24px;box-sizing:border-box;padding-left:2px;line-height:24px;text-align:left;font-family:"Liberation Sans", sans-serif;font-size:15px;font-weight:normal;color:#000000;white-space:nowrap;overflow:visible'>ヤマモト　タマキ</div>
<div style='position:absolute;left:376px;top:463px;width:90px;height:24px;box-sizing:border-box;padding-right:1px;letter-spacing:0.55px;line-height:24px;text-align:right;font-family:"Liberation Sans", sans-serif;font-size:15px;font-weight:normal;color:#000000;white-space:nowrap;overflow:visible'>1979/11/2</div>
<div style='position:absolute;left:467px;top:463px;width:74px;height:24px;box-sizing:border-box;padding-left:2px;line-height:24px;text-align:left;font-family:"Liberation Sans", sans-serif;font-size:15px;font-weight:normal;color:#000000;white-space:nowrap;overflow:visible'>604-8436</div>
<div style='position:absolute;left:542px;top:463px;width:253px;height:24px;box-sizing:border-box;padding-left:2px;line-height:24px;text-align:left;font-family:"Liberation Sans", sans-serif;font-size:15px;font-weight:normal;color:#000000;white-space:nowrap;overflow:visible'>京都府京都市中京区西ノ京下合町</div>
<div style='position:absolute;left:796px;top:463px;width:74px;height:24px;box-sizing:border-box;padding-left:2px;line-height:24px;text-align:left;font-family:"Liberation Sans", sans-serif;font-size:15px;font-weight:normal;color:#000000;white-space:nowrap;overflow:visible'>XXXX-X</div>
<div style='position:absolute;left:1085px;top:463px;width:109px;height:24px;box-sizing:border-box;padding-left:2px;line-height:24px;text-align:left;font-family:"Liberation Sans", sans-serif;font-size:15px;font-weight:normal;color:#000000;white-space:nowrap;overflow:visible'>075XXXXXXX</div>
<div style='position:absolute;left:29px;top:488px;width:71px;height:24px;box-sizing:border-box;padding-left:2px;line-height:24px;text-align:left;font-family:"Liberation Sans", sans-serif;font-size:15px;font-weight:normal;color:#000000;white-space:nowrap;overflow:visible'>1009</div>
<div style='position:absolute;left:101px;top:488px;width:103px;height:24px;box-sizing:border-box;padding-left:2px;line-height:24px;text-align:left;font-family:"Liberation Sans", sans-serif;font-size:15px;font-weight:normal;color:#000000;white-space:nowrap;overflow:visible'>萩原　幸雄</div>
<div style='position:absolute;left:205px;top:488px;width:170px;height:24px;box-sizing:border-box;padding-left:2px;line-height:24px;text-align:left;font-family:"Liberation Sans", sans-serif;font-size:15px;font-weight:normal;color:#000000;white-space:nowrap;overflow:visible'>ハギワラ　ユキオ</div>
<div style='position:absolute;left:376px;top:488px;width:90px;height:24px;box-sizing:border-box;padding-right:1px;letter-spacing:0.55px;line-height:24px;text-align:right;font-family:"Liberation Sans", sans-serif;font-size:15px;font-weight:normal;color:#000000;white-space:nowrap;overflow:visible'>1953/2/27</div>
<div style='position:absolute;left:467px;top:488px;width:74px;height:24px;box-sizing:border-box;padding-left:2px;line-height:24px;text-align:left;font-family:"Liberation Sans", sans-serif;font-size:15px;font-weight:normal;color:#000000;white-space:nowrap;overflow:visible'>940-0063</div>
<div style='position:absolute;left:542px;top:488px;width:253px;height:24px;box-sizing:border-box;padding-left:2px;line-height:24px;text-align:left;font-family:"Liberation Sans", sans-serif;font-size:15px;font-weight:normal;color:#000000;white-space:nowrap;overflow:visible'>新潟県長岡市旭町</div>
<div style='position:absolute;left:796px;top:488px;width:74px;height:24px;box-sizing:border-box;padding-left:2px;line-height:24px;text-align:left;font-family:"Liberation Sans", sans-serif;font-size:15px;font-weight:normal;color:#000000;white-space:nowrap;overflow:visible'>X-X-X</div>
<div style='position:absolute;left:871px;top:488px;width:213px;height:24px;box-sizing:border-box;padding-left:2px;line-height:24px;text-align:left;font-family:"Liberation Sans", sans-serif;font-size:15px;font-weight:normal;color:#000000;white-space:nowrap;overflow:visible'>コーポフェニックスXXX</div>
<div style='position:absolute;left:1085px;top:488px;width:109px;height:24px;box-sizing:border-box;padding-left:2px;line-height:24px;text-align:left;font-family:"Liberation Sans", sans-serif;font-size:15px;font-weight:normal;color:#000000;white-space:nowrap;overflow:visible'>0258XXXXXX</div>
<div style='position:absolute;left:29px;top:513px;width:71px;height:24px;box-sizing:border-box;padding-left:2px;line-height:24px;text-align:left;font-family:"Liberation Sans", sans-serif;font-size:15px;font-weight:normal;color:#000000;white-space:nowrap;overflow:visible'>1010</div>
<div style='position:absolute;left:101px;top:513px;width:103px;height:24px;box-sizing:border-box;padding-left:2px;line-height:24px;text-align:left;font-family:"Liberation Sans", sans-serif;font-size:15px;font-weight:normal;color:#000000;white-space:nowrap;overflow:visible'>都筑　京太郎</div>
<div style='position:absolute;left:205px;top:513px;width:170px;height:24px;box-sizing:border-box;padding-left:2px;line-height:24px;text-align:left;font-family:"Liberation Sans", sans-serif;font-size:15px;font-weight:normal;color:#000000;white-space:nowrap;overflow:visible'>ツヅキ　キョウタロウ</div>
<div style='position:absolute;left:376px;top:513px;width:90px;height:24px;box-sizing:border-box;padding-right:1px;letter-spacing:0.55px;line-height:24px;text-align:right;font-family:"Liberation Sans", sans-serif;font-size:15px;font-weight:normal;color:#000000;white-space:nowrap;overflow:visible'>1958/12/15</div>
<div style='position:absolute;left:467px;top:513px;width:74px;height:24px;box-sizing:border-box;padding-left:2px;line-height:24px;text-align:left;font-family:"Liberation Sans", sans-serif;font-size:15px;font-weight:normal;color:#000000;white-space:nowrap;overflow:visible'>850-0036</div>
<div style='position:absolute;left:542px;top:513px;width:253px;height:24px;box-sizing:border-box;padding-left:2px;line-height:24px;text-align:left;font-family:"Liberation Sans", sans-serif;font-size:15px;font-weight:normal;color:#000000;white-space:nowrap;overflow:visible'>長崎県長崎市五島町</div>
<div style='position:absolute;left:796px;top:513px;width:74px;height:24px;box-sizing:border-box;padding-left:2px;line-height:24px;text-align:left;font-family:"Liberation Sans", sans-serif;font-size:15px;font-weight:normal;color:#000000;white-space:nowrap;overflow:visible'>X-XXXX</div>
<div style='position:absolute;left:1085px;top:513px;width:109px;height:24px;box-sizing:border-box;padding-left:2px;line-height:24px;text-align:left;font-family:"Liberation Sans", sans-serif;font-size:15px;font-weight:normal;color:#000000;white-space:nowrap;overflow:visible'>0959XXXXXX</div>
<div style='position:absolute;left:29px;top:538px;width:71px;height:24px;box-sizing:border-box;padding-left:2px;line-height:24px;text-align:left;font-family:"Liberation Sans", sans-serif;font-size:15px;font-weight:normal;color:#000000;white-space:nowrap;overflow:visible'>1011</div>
<div style='position:absolute;left:101px;top:538px;width:103px;height:24px;box-sizing:border-box;padding-left:2px;line-height:24px;text-align:left;font-family:"Liberation Sans", sans-serif;font-size:15px;font-weight:normal;color:#000000;white-space:nowrap;overflow:visible'>奈良沢　良太</div>
<div style='position:absolute;left:205px;top:538px;width:170px;height:24px;box-sizing:border-box;padding-left:2px;line-height:24px;text-align:left;font-family:"Liberation Sans", sans-serif;font-size:15px;font-weight:normal;color:#000000;white-space:nowrap;overflow:visible'>ナラサワ　リョウタ</div>
<div style='position:absolute;left:376px;top:538px;width:90px;height:24px;box-sizing:border-box;padding-right:1px;letter-spacing:0.55px;line-height:24px;text-align:right;font-family:"Liberation Sans", sans-serif;font-size:15px;font-weight:normal;color:#000000;white-space:nowrap;overflow:visible'>1977/9/10</div>
<div style='position:absolute;left:467px;top:538px;width:74px;height:24px;box-sizing:border-box;padding-left:2px;line-height:24px;text-align:left;font-family:"Liberation Sans", sans-serif;font-size:15px;font-weight:normal;color:#000000;white-space:nowrap;overflow:visible'>320-0043</div>
<div style='position:absolute;left:542px;top:538px;width:253px;height:24px;box-sizing:border-box;padding-left:2px;line-height:24px;text-align:left;font-family:"Liberation Sans", sans-serif;font-size:15px;font-weight:normal;color:#000000;white-space:nowrap;overflow:visible'>栃木県宇都宮市桜</div>
<div style='position:absolute;left:796px;top:538px;width:74px;height:24px;box-sizing:border-box;padding-left:2px;line-height:24px;text-align:left;font-family:"Liberation Sans", sans-serif;font-size:15px;font-weight:normal;color:#000000;white-space:nowrap;overflow:visible'>1-X-20</div>
<div style='position:absolute;left:1085px;top:538px;width:109px;height:24px;box-sizing:border-box;padding-left:2px;line-height:24px;text-align:left;font-family:"Liberation Sans", sans-serif;font-size:15px;font-weight:normal;color:#000000;white-space:nowrap;overflow:visible'>0286XXXXXX</div>
<div style='position:absolute;left:29px;top:563px;width:71px;height:24px;box-sizing:border-box;padding-left:2px;line-height:24px;text-align:left;font-family:"Liberation Sans", sans-serif;font-size:15px;font-weight:normal;color:#000000;white-space:nowrap;overflow:visible'>1012</div>
<div style='position:absolute;left:101px;top:563px;width:103px;height:24px;box-sizing:border-box;padding-left:2px;line-height:24px;text-align:left;font-family:"Liberation Sans", sans-serif;font-size:15px;font-weight:normal;color:#000000;white-space:nowrap;overflow:visible'>高橋　裕子</div>
<div style='position:absolute;left:205px;top:563px;width:170px;height:24px;box-sizing:border-box;padding-left:2px;line-height:24px;text-align:left;font-family:"Liberation Sans", sans-serif;font-size:15px;font-weight:normal;color:#000000;white-space:nowrap;overflow:visible'>タカハシ　ユウコ</div>
<div style='position:absolute;left:376px;top:563px;width:90px;height:24px;box-sizing:border-box;padding-right:1px;letter-spacing:0.55px;line-height:24px;text-align:right;font-family:"Liberation Sans", sans-serif;font-size:15px;font-weight:normal;color:#000000;white-space:nowrap;overflow:visible'>1983/10/29</div>
<div style='position:absolute;left:467px;top:563px;width:74px;height:24px;box-sizing:border-box;padding-left:2px;line-height:24px;text-align:left;font-family:"Liberation Sans", sans-serif;font-size:15px;font-weight:normal;color:#000000;white-space:nowrap;overflow:visible'>230-0051</div>
<div style='position:absolute;left:542px;top:563px;width:253px;height:24px;box-sizing:border-box;padding-left:2px;line-height:24px;text-align:left;font-family:"Liberation Sans", sans-serif;font-size:15px;font-weight:normal;color:#000000;white-space:nowrap;overflow:visible'>神奈川県横浜市鶴見区鶴見中央</div>
<div style='position:absolute;left:796px;top:563px;width:74px;height:24px;box-sizing:border-box;padding-left:2px;line-height:24px;text-align:left;font-family:"Liberation Sans", sans-serif;font-size:15px;font-weight:normal;color:#000000;white-space:nowrap;overflow:visible'>X-10-X</div>
<div style='position:absolute;left:871px;top:563px;width:213px;height:24px;box-sizing:border-box;padding-left:2px;line-height:24px;text-align:left;font-family:"Liberation Sans", sans-serif;font-size:15px;font-weight:normal;color:#000000;white-space:nowrap;overflow:visible'>鶴見マンションＡ棟　XXX号</div>
<div style='position:absolute;left:1085px;top:563px;width:109px;height:24px;box-sizing:border-box;padding-left:2px;line-height:24px;text-align:left;font-family:"Liberation Sans", sans-serif;font-size:15px;font-weight:normal;color:#000000;white-space:nowrap;overflow:visible'>045XXXXXXX</div>
<svg style='position:absolute;left:377px;top:589px;' width='20' height='20' viewBox='0 0 20 20' fill='none'><g shape-rendering='crispEdges'><rect x='0.5' y='0.5' width='19' height='19' fill='#fdfdfd' stroke='#a0a0a0'/><path d='M3.5 3.5H15.5V7.5H9.5V11.5H3.5Z' fill='#fff' stroke='#888'/><rect x='4' y='4' width='5' height='3' fill='#3b82f6'/><path d='M3.5 7.5H9.5M9.5 3.5V7.5' stroke='#888'/><rect x='3' y='13' width='1' height='1' fill='#888'/><rect x='9' y='13' width='1' height='1' fill='#888'/><rect x='3' y='15' width='1' height='1' fill='#888'/><rect x='5' y='15' width='1' height='1' fill='#888'/><rect x='7' y='15' width='1' height='1' fill='#888'/><rect x='9' y='15' width='1' height='1' fill='#888'/><rect x='12' y='14' width='5' height='1' fill='#888'/><rect x='14' y='12' width='1' height='5' fill='#888'/></g></svg>
<div style='position:absolute;left:1344px;top:213px;width:22px;height:465px;background:#e6e6e6;'></div>
<div style='position:absolute;left:1344px;top:238px;width:1px;height:440px;background:#ababab;'></div>
<div style='position:absolute;left:1348px;top:218px;width:15px;height:447px;background:#d6d6d6;'></div>
<div style='position:absolute;left:1348px;top:215px;width:15px;height:15px;box-sizing:border-box;border:1px solid #c8c8c8;background:#ffffff;'></div>
<svg style='position:absolute;left:1351px;top:220px;' width='9' height='5' viewBox='0 0 9 5' fill='none'><path d='M0.5 4.5L4.5 0.5L8.5 4.5Z' fill='#606060'/></svg>
<div style='position:absolute;left:1348px;top:230px;width:15px;height:367px;box-sizing:border-box;border:1px solid #c8c8c8;background:#ffffff;'></div>
<div style='position:absolute;left:1348px;top:664px;width:15px;height:14px;box-sizing:border-box;border:1px solid #c8c8c8;background:#ffffff;'></div>
<svg style='position:absolute;left:1351px;top:669px;' width='9' height='5' viewBox='0 0 9 5' fill='none'><path d='M0.5 0.5L4.5 4.5L8.5 0.5Z' fill='#606060'/></svg>
<div style='position:absolute;left:0px;top:678px;width:1366px;height:28px;background:#e6e6e6;'></div>
<div style='position:absolute;left:0px;top:678px;width:1344px;height:1px;background:#ababab;'></div>
<svg style='position:absolute;left:26px;top:688px;' width='6' height='8' viewBox='0 0 6 8' fill='none'><path d='M5.5 0.5V7.5L0.5 4Z' fill='#c0c0c0'/></svg>
<svg style='position:absolute;left:55px;top:688px;' width='6' height='8' viewBox='0 0 6 8' fill='none'><path d='M0.5 0.5V7.5L5.5 4Z' fill='#c0c0c0'/></svg>
<div style='position:absolute;left:100px;top:678px;width:89px;height:25px;background:#ffffff;'></div>
<div style='position:absolute;left:100px;top:678px;width:1px;height:25px;background:#ababab;'></div>
<div style='position:absolute;left:188px;top:678px;width:1px;height:25px;background:#ababab;'></div>
<div style='position:absolute;left:100px;top:700px;width:89px;height:3px;background:#217346;'></div>
<div style='position:absolute;left:111px;top:683.0px;line-height:18px;font-family:"Liberation Sans", sans-serif;font-size:13.5px;font-weight:normal;color:#217346;white-space:pre;transform:scaleX(0.9429);transform-origin:0 0;'>受講者名簿</div>
<svg style='position:absolute;left:221px;top:683px;' width='18' height='18' viewBox='0 0 18 18' fill='none'><circle cx='9' cy='9' r='7.6' stroke='#555' stroke-width='1.2'/><path d='M9 5V13M5 9H13' stroke='#555' stroke-width='1.6'/></svg>
<div style='position:absolute;left:819px;top:687px;width:2px;height:2px;background:#a0a0a0;'></div>
<div style='position:absolute;left:819px;top:691px;width:2px;height:2px;background:#a0a0a0;'></div>
<div style='position:absolute;left:819px;top:695px;width:2px;height:2px;background:#a0a0a0;'></div>
<div style='position:absolute;left:836px;top:685px;width:15px;height:15px;box-sizing:border-box;border:1px solid #b0b0b0;background:#ffffff;'></div>
<svg style='position:absolute;left:840px;top:689px;' width='6' height='8' viewBox='0 0 6 8' fill='none'><path d='M5.5 0.5V7.5L0.5 4Z' fill='#555'/></svg>
<div style='position:absolute;left:851px;top:685px;width:493px;height:15px;background:#d6d6d6;'></div>
<div style='position:absolute;left:851px;top:685px;width:435px;height:15px;box-sizing:border-box;border:1px solid #b0b0b0;background:#ffffff;'></div>
<div style='position:absolute;left:1330px;top:685px;width:15px;height:15px;box-sizing:border-box;border:1px solid #b0b0b0;background:#ffffff;'></div>
<svg style='position:absolute;left:1335px;top:689px;' width='6' height='8' viewBox='0 0 6 8' fill='none'><path d='M0.5 0.5V7.5L5.5 4Z' fill='#555'/></svg>
<div style='position:absolute;left:0px;top:706px;width:1366px;height:22px;background:#f3f2f1;'></div>
<div style='position:absolute;left:0px;top:706px;width:1366px;height:1px;background:#cfcfcf;'></div>
<div style='position:absolute;left:7.5px;top:708.5px;line-height:17px;font-family:"Liberation Sans", sans-serif;font-size:13px;font-weight:normal;color:#444;white-space:pre;transform:scaleX(0.9327);transform-origin:0 0;'>準備完了</div>
<svg style='position:absolute;left:74px;top:710px;' width='16' height='15' viewBox='0 0 16 15' fill='none'><path d='M6.5 12.3H1.6V1.6H14.4V5.5' stroke='#333' stroke-width='1.2'/><path d='M1.6 3.6H14.4' stroke='#333' stroke-width='1.2'/><path d='M3.5 5.6H5.8M3.5 7.6H5.3M3.5 9.6H5.3' stroke='#333' stroke-width='1.1'/><circle cx='10.5' cy='9.5' r='4' fill='#f3f2f1' stroke='#333' stroke-width='1.3'/><circle cx='10.5' cy='9.5' r='1.7' fill='#333'/></svg>
<div style='position:absolute;left:1060px;top:706px;width:40px;height:22px;background:#c8c6c4;'></div>
<svg style='position:absolute;left:1072px;top:709px;' width='16' height='16' viewBox='0 0 16 16' fill='none'><g shape-rendering='crispEdges' fill='#222'><rect x='1' y='1' width='14' height='2'/><rect x='1' y='13' width='14' height='2'/><rect x='1' y='1' width='2' height='14'/><rect x='13' y='1' width='2' height='14'/><rect x='6' y='1' width='1' height='14'/><rect x='9' y='1' width='1' height='14'/><rect x='1' y='6' width='14' height='1'/><rect x='1' y='9' width='14' height='1'/></g></svg>
<svg style='position:absolute;left:1112px;top:709px;' width='16' height='16' viewBox='0 0 16 16' fill='none'><g shape-rendering='crispEdges' stroke='#333' stroke-width='1'><rect x='1.5' y='1.5' width='13' height='13'/><rect x='4.5' y='2.5' width='7' height='10'/><path d='M6 5.5H10M6 7.5H10M6 9.5H10'/></g></svg>
<svg style='position:absolute;left:1152px;top:709px;' width='16' height='16' viewBox='0 0 16 16' fill='none'><rect x='1.5' y='1.5' width='13' height='13' stroke='#333' stroke-width='1.1'/><path d='M1.5 8.5H10.5V1.5M6.5 1.5V8.5' stroke='#333' stroke-width='1.1'/></svg>
<div style='position:absolute;left:1186px;top:716px;width:8px;height:1.3px;background:#444;'></div>
<div style='position:absolute;left:1199px;top:717px;width:100px;height:1px;background:#a0a0a0;'></div>
<div style='position:absolute;left:1247px;top:711px;width:5px;height:11px;background:#707070;'></div>
<div style='position:absolute;left:1304px;top:716px;width:8px;height:1.3px;background:#444;'></div>
<div style='position:absolute;left:1307.3px;top:712.7px;width:1.3px;height:8px;background:#444;'></div>
<div style='position:absolute;left:1324.5px;top:708.0px;line-height:18px;font-family:"Liberation Sans", sans-serif;font-size:13.5px;font-weight:normal;color:#444;white-space:pre;transform:scaleX(0.9701);transform-origin:0 0;'>100%</div>
<div style='position:absolute;left:199px;top:359px;width:179px;height:32px;box-sizing:border-box;border:6.5px solid #ff0000;border-radius:6px'></div>
<div style='position:absolute;left:386.5px;top:349.6px;width:46px;height:46px;border-radius:50%;background:radial-gradient(circle closest-side, rgba(255,255,255,0.6) 0, rgba(236,236,236,0.68) 9px, rgba(246,246,246,0.93) 12px, rgba(255,255,255,1) 16px, rgba(255,255,255,1) 19px, rgba(255,255,255,0.45) 21px, rgba(255,255,255,0) 23px)'></div>
<div style='position:absolute;left:392px;top:355px;width:35px;height:35px;box-sizing:border-box;border-radius:50%;border:1.7px solid #ff0000'></div>
<svg style='position:absolute;left:400px;top:360px;' width='17' height='26' viewBox='0 0 17 26' fill='none'><path d='M13.3 3.1V22.4H7.6V9.3C6.3 10.4 5.2 10.9 3.8 11.2V7.2C5.6 6.6 7.3 5.3 8.6 3.1Z' fill='#ff0000' stroke='#fff' stroke-width='0.8' paint-order='stroke'/></svg></body></html>
